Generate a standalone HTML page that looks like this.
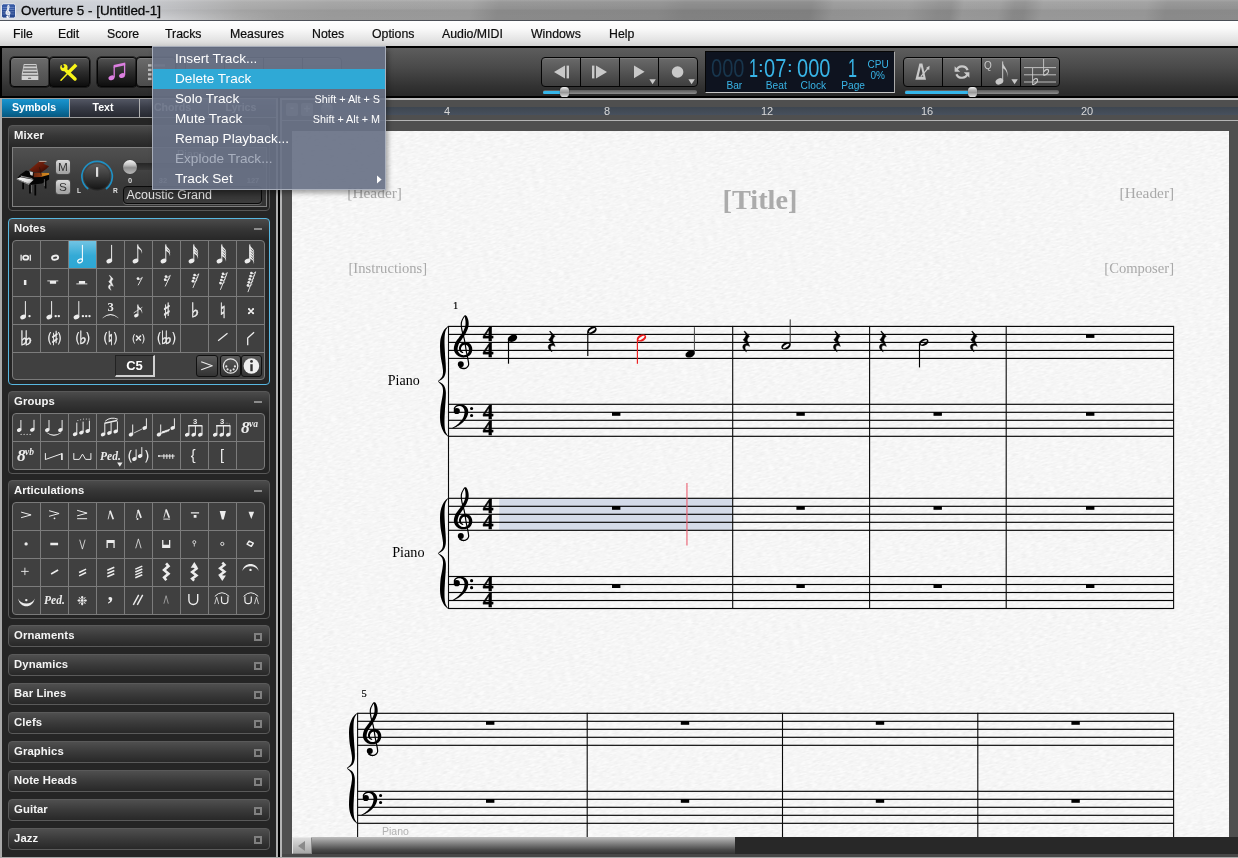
<!DOCTYPE html><html><head><meta charset="utf-8"><title>Overture 5 - [Untitled-1]</title><style>
*{box-sizing:border-box;margin:0;padding:0}
html,body{width:1238px;height:858px;overflow:hidden}
body{position:relative;will-change:transform;background:#252525;font-family:"Liberation Sans",sans-serif;font-size:13px;color:#fff}
.a{position:absolute}
.titlebar{left:0;top:0;width:1238px;height:21px;background:linear-gradient(100deg,#c6cbd3 0,#cbced4 110px,#b9babd 175px,#a6a6a6 240px,#9d9d9d 330px,#9c9c9c 465px,#8d8d8d 492px,#8b8b8b 650px,#848484 675px,#838383 800px,#959595 822px,#999 895px,#8c8c8c 925px,#8b8b8b 938px,#9b9b9b 950px,#999 985px,#8b8b8b 1000px,#8a8a8a 1010px,#9b9b9b 1028px,#9a9a9a 1130px,#8d8d8d 1150px,#8e8e8e 1238px)}
.titlebar .sh{left:0;top:0;width:1238px;height:21px;background:linear-gradient(180deg,rgba(255,255,255,.22) 0,rgba(255,255,255,.10) 2px,rgba(255,255,255,.03) 9px,rgba(0,0,0,.03) 10px,rgba(0,0,0,.02) 19.6px,rgba(58,63,72,.9) 20px,rgba(70,74,82,.85) 21px)}
.title{left:21px;top:3px;font-size:13.4px;color:#080808;-webkit-text-stroke:.3px #080808;white-space:nowrap;letter-spacing:0px}
.menubar{left:0;top:21px;width:1238px;height:25px;background:linear-gradient(180deg,#fff 0,#fafafa 30%,#e4e4e4 75%,#d2d2d2 100%)}
.menubar span{position:absolute;top:5.5px;color:#0c0c0c;-webkit-text-stroke:.2px #0c0c0c;font-size:12.3px;white-space:nowrap}
.toolbar{left:0;top:46px;width:1238px;height:52px;background:#000}
.toolbar .bg{left:2px;top:2px;width:1236px;height:48px;background:linear-gradient(180deg,#5d5d5d 0,#4a4a4a 40%,#323232 80%,#292929 100%)}
.btn{position:absolute;top:57px;height:30px;border:1px solid #050505;border-radius:4px;background:linear-gradient(180deg,#6c6c6c 0,#5a5a5a 50%,#4c4c4c 100%);box-shadow:inset 0 1px 0 rgba(255,255,255,.12),0 0 0 .5px #050505}
.btn.dk{background:linear-gradient(180deg,#525252 0,#2c2c2c 50%,#0e0e0e 100%)}
.btn.t{background:linear-gradient(180deg,#6a6a6a 0,#565656 45%,#3e3e3e 100%);border-radius:0;box-shadow:inset 0 1px 0 rgba(255,255,255,.12)}
.btn.l{border-radius:4px 0 0 4px}.btn.r{border-radius:0 4px 4px 0}
.btn svg{position:absolute;left:0;top:0}
.slider{position:absolute;height:4px;border-radius:2px;background:linear-gradient(180deg,#5a5a5a,#8c8c8c)}
.slider i{position:absolute;left:0;top:.5px;height:3px;border-radius:2px;background:#35b6ea}
.slider b{position:absolute;top:-2.8px;width:9px;height:9.6px;border-radius:3.6px;background:linear-gradient(180deg,#f4f4f4 0,#b4b4b4 30%,#999 55%,#c8c8c8 85%,#e0e0e0 100%);box-shadow:0 0 1px #111}
.lcd{left:705px;top:51px;width:190px;height:42px;background:#0e131f;border:1px solid #060606;border-right-color:#aaa;border-bottom-color:#c8c8c8}
.lcd span{position:absolute;white-space:nowrap;color:#38b4e6;transform-origin:0 0;line-height:1}
.lcd .big{font-size:25.4px;top:3.9px;transform:scaleX(.79)}
.lcd .col{font-size:14px;font-weight:bold;top:8.2px}
.lcd .lab{font-size:10.2px;top:28.8px}
.tabs{left:2px;top:98px;width:276px;height:20px}
.tab{position:absolute;top:1px;height:18px;text-align:center;font-weight:bold;font-size:10.6px;line-height:17px;color:#fff;background:linear-gradient(180deg,#535764 0,#3a3d48 45%,#262830 100%);border-left:1px solid #b0b0b0}
.tab.sel{background:linear-gradient(180deg,#1b95cf 0,#0d79ad 50%,#07587f 100%)}
.panel{position:absolute;left:8px;width:262px;border:1px solid #585858;border-radius:4px;background:linear-gradient(180deg,#4b4b4b 0,#363636 10px,#262626 22px,#242424 100%)}
.panel.c{height:22px;background:linear-gradient(180deg,#4f4f4f 0,#3a3a3a 50%,#282828 100%);border-color:#5a5a5a}
.panel .h{position:absolute;left:5px;top:3px;font-weight:bold;font-size:11.3px;color:#f4f4f4;letter-spacing:.1px}
.panel .mn{position:absolute;right:7px;top:9px;width:8px;height:2px;background:#8c8c8c}
.panel .sq{position:absolute;right:7px;top:6.5px;width:8px;height:8px;border:2px solid #808080}
.grid{position:absolute;left:3px;width:253px;border:1px solid #7a7a7a;border-radius:4px;background:#404040;overflow:hidden}
.grid svg{position:absolute;left:0;top:0}
.dd{left:152px;top:46px;width:234px;height:144px;background:rgba(105,114,135,.93);border:1px solid rgba(190,195,205,.75);box-shadow:2px 3px 5px rgba(0,0,0,.35)}
.dd div{position:absolute;left:0;width:232px;height:20px;line-height:19px;padding-left:22px;font-size:13.6px;color:#fff;white-space:nowrap}
.dd div.hl{background:#2fa9d6}
.dd div.dis{color:#a9b0bf}
.dd div em{position:absolute;right:5px;top:0;font-style:normal;font-size:10.8px;line-height:21px}
</style></head><body>
<div class="a titlebar"><div class="a sh"></div>
<div class="a" style="left:0;top:7px;width:280px;height:13px;background:linear-gradient(180deg,rgba(255,255,255,0),rgba(255,255,255,.42));-webkit-mask-image:linear-gradient(90deg,#000 0,#000 45%,transparent 100%);mask-image:linear-gradient(90deg,#000 0,#000 45%,transparent 100%)"></div>
<svg class="a" style="left:1px;top:3px" width="15" height="16" viewBox="0 0 15 16"><rect x=".5" y=".9" width="14" height="14.2" rx="2" fill="#27488f" stroke="#e4e8f2" stroke-width="1"/><rect x="1.2" y="1.6" width="12.6" height="5.5" rx="1.4" fill="#4268b8" opacity=".55"/><path d="M1.5 4.4h12M1.5 6.6h12M1.5 8.8h12M1.5 11h12" stroke="#9fb2de" stroke-width=".6" opacity=".75"/><path d="M7.03,10.81 L6.97,10.76 L6.87,10.69 L6.76,10.62 L6.66,10.54 L6.59,10.46 L6.55,10.39 L6.52,10.31 L6.49,10.20 L6.47,10.08 L6.47,9.96 L6.48,9.85 L6.50,9.74 L6.54,9.64 L6.60,9.52 L6.68,9.40 L6.76,9.29 L6.85,9.20 L6.94,9.14 L7.03,9.09 L7.15,9.05 L7.27,9.02 L7.40,9.00 L7.51,9.00 L7.61,9.02 L7.70,9.06 L7.82,9.12 L7.93,9.19 L8.03,9.28 L8.12,9.37 L8.18,9.45 L8.24,9.56 L8.29,9.69 L8.33,9.84 L8.37,9.99 L8.38,10.14 L8.38,10.27 L8.37,10.41 L8.34,10.57 L8.29,10.72 L8.23,10.87 L8.16,11.00 L8.08,11.10 L7.97,11.20 L7.83,11.29 L7.65,11.38 L7.47,11.45 L7.29,11.50 L7.11,11.51 L6.94,11.50 L6.77,11.46 L6.59,11.40 L6.43,11.32 L6.28,11.22 L6.16,11.12 L6.04,10.99 L5.93,10.84 L5.83,10.67 L5.75,10.50 L5.69,10.34 L5.66,10.19 L5.65,10.03 L5.67,9.84 L5.70,9.62 L5.75,9.40 L5.82,9.17 L5.90,8.95 L5.99,8.75 L6.11,8.54 L6.25,8.32 L6.41,8.09 L6.58,7.85 L6.74,7.61 L6.88,7.39 L7.03,7.17 L7.19,6.94 L7.34,6.71 L7.49,6.47 L7.63,6.22 L7.75,5.97 L7.87,5.71 L7.98,5.46 L8.08,5.20 L8.17,4.94 L8.24,4.69 L8.28,4.44 L8.31,4.21 L8.32,3.98 L8.31,3.77 L8.29,3.56 L8.27,3.36 L8.23,3.16 L8.18,2.95 L8.12,2.76 L8.06,2.58 L7.99,2.43 L7.93,2.30 L7.87,2.19 L7.80,2.11 L7.73,2.03 L7.64,1.96 L7.52,1.92 L7.40,1.94 L7.31,1.99 L7.23,2.05 L7.16,2.13 L7.09,2.23 L7.02,2.35 L6.94,2.48 L6.86,2.63 L6.76,2.81 L6.66,3.00 L6.56,3.22 L6.48,3.46 L6.43,3.72 L6.40,3.98 L6.40,4.25 L6.42,4.53 L6.45,4.82 L6.49,5.13 L6.55,5.47 L6.62,5.82 L6.72,6.19 L6.83,6.58 L6.94,6.98 L7.05,7.39 L7.15,7.82 L7.23,8.27 L7.31,8.76 L7.39,9.25 L7.47,9.76 L7.55,10.25 L7.63,10.72 L7.72,11.19 L7.82,11.66 L7.92,12.13 L8.01,12.56 L8.08,12.94 L8.13,13.26 L8.15,13.50 L8.16,13.66 L8.15,13.78 L8.13,13.86 L8.10,13.94 L8.05,14.03 L7.99,14.13 L7.90,14.23 L7.80,14.32 L7.69,14.40 L7.58,14.46 L7.47,14.51 L7.37,14.54 L7.25,14.55 L7.12,14.55 L6.99,14.54 L6.87,14.51 L6.77,14.48 L6.67,14.44 L6.57,14.37 L6.47,14.29 L6.37,14.21 L6.28,14.13 L6.22,14.08 L5.96,14.42 L6.02,14.46 L6.11,14.53 L6.23,14.61 L6.36,14.70 L6.51,14.77 L6.66,14.83 L6.81,14.86 L6.96,14.88 L7.12,14.88 L7.27,14.87 L7.43,14.85 L7.58,14.80 L7.72,14.73 L7.86,14.65 L7.99,14.55 L8.11,14.43 L8.22,14.31 L8.30,14.18 L8.36,14.06 L8.41,13.95 L8.44,13.82 L8.45,13.66 L8.44,13.47 L8.41,13.22 L8.36,12.89 L8.29,12.50 L8.20,12.07 L8.10,11.60 L8.00,11.13 L7.91,10.67 L7.83,10.20 L7.75,9.71 L7.68,9.21 L7.60,8.71 L7.52,8.22 L7.43,7.76 L7.33,7.33 L7.22,6.91 L7.10,6.50 L7.00,6.12 L6.90,5.76 L6.83,5.41 L6.78,5.09 L6.73,4.79 L6.71,4.50 L6.69,4.24 L6.69,3.99 L6.71,3.76 L6.75,3.53 L6.81,3.32 L6.90,3.11 L6.98,2.92 L7.07,2.74 L7.15,2.59 L7.22,2.47 L7.29,2.37 L7.35,2.29 L7.40,2.24 L7.45,2.22 L7.46,2.22 L7.44,2.24 L7.41,2.24 L7.39,2.26 L7.39,2.31 L7.40,2.39 L7.41,2.49 L7.44,2.61 L7.47,2.76 L7.50,2.92 L7.52,3.09 L7.54,3.27 L7.55,3.44 L7.56,3.61 L7.56,3.79 L7.56,3.97 L7.55,4.14 L7.53,4.33 L7.49,4.51 L7.43,4.72 L7.36,4.94 L7.27,5.17 L7.17,5.40 L7.06,5.64 L6.95,5.86 L6.83,6.07 L6.69,6.28 L6.54,6.49 L6.38,6.71 L6.22,6.93 L6.06,7.15 L5.91,7.37 L5.73,7.59 L5.56,7.82 L5.38,8.07 L5.22,8.33 L5.08,8.60 L4.97,8.88 L4.88,9.16 L4.81,9.45 L4.76,9.75 L4.75,10.04 L4.79,10.34 L4.87,10.62 L5.00,10.88 L5.16,11.12 L5.34,11.33 L5.53,11.51 L5.73,11.67 L5.94,11.79 L6.17,11.89 L6.41,11.96 L6.65,12.01 L6.89,12.04 L7.13,12.04 L7.36,12.02 L7.61,11.98 L7.85,11.92 L8.09,11.83 L8.31,11.72 L8.51,11.59 L8.69,11.42 L8.84,11.22 L8.96,11.02 L9.06,10.80 L9.13,10.57 L9.17,10.35 L9.18,10.12 L9.16,9.88 L9.12,9.65 L9.05,9.42 L8.96,9.21 L8.84,9.01 L8.69,8.83 L8.52,8.68 L8.34,8.56 L8.14,8.46 L7.94,8.38 L7.74,8.34 L7.53,8.32 L7.32,8.34 L7.12,8.39 L6.93,8.46 L6.75,8.54 L6.58,8.65 L6.44,8.79 L6.31,8.94 L6.21,9.11 L6.12,9.28 L6.06,9.46 L6.01,9.63 L5.99,9.81 L5.99,9.98 L6.02,10.16 L6.06,10.32 L6.12,10.47 L6.20,10.61 L6.32,10.74 L6.46,10.83 L6.61,10.90 L6.74,10.95 L6.85,10.99 L6.92,11.02Z M5.52,13.67 a0.90,0.90 0 1,0 1.80,0 a0.90,0.90 0 1,0 -1.80,0Z" fill="#fff" stroke="#fff" stroke-width=".45"/></svg>
<div class="a title">Overture 5 - [Untitled-1]</div></div>
<div class="a menubar">
<span style="left:13px">File</span>
<span style="left:58px">Edit</span>
<span style="left:107px">Score</span>
<span style="left:165px">Tracks</span>
<span style="left:230px">Measures</span>
<span style="left:312px">Notes</span>
<span style="left:372px">Options</span>
<span style="left:442px">Audio/MIDI</span>
<span style="left:531px">Windows</span>
<span style="left:609px">Help</span>
</div>
<div class="a toolbar"><div class="a bg"></div></div>
<div class="btn " style="left:10px;width:40px"><svg width="38" height="28" viewBox="0 0 38 28"><path d="M12.8,6h12.6l1.8,9.8v6.2h-16.4v-6.2Z" fill="#cdcdcd"/><path d="M13.4,7.0h11.4l.25,1.4h-11.9Z" fill="#6e6e6e"/><path d="M12.7,10.2h12.8l.25,1.5h-13.3Z" fill="#6e6e6e"/><path d="M12.1,13.5h14l.25,1.5h-14.5Z" fill="#6e6e6e"/><path d="M11.3,16.8h15.6v1.3h-15.6Z" fill="#7a7a7a"/><path d="M10.8,18.1h16.4v3.9h-16.4Z" fill="#d2d2d2"/><rect x="17" y="19.8" width="3.2" height="1" rx=".4" fill="#555"/></svg></div>
<div class="btn dk" style="left:49px;width:41px"><svg width="38" height="28" viewBox="0 0 38 28"><path d="M11,22.3 L18.2,14.8" stroke="#f8f418" stroke-width="1.5" stroke-linecap="round"/><path d="M17.9,15.1 L26.2,6.8" stroke="#f8f418" stroke-width="3.5"/><path d="M16.0,12.4 L25.0,21.0" stroke="#f8f418" stroke-width="3.5" stroke-linecap="round"/><circle cx="13.9" cy="9.6" r="3.7" fill="#f8f418"/><path d="M13.2,9.0 L9.6,5.0 L13.6,4.4Z" fill="#3b3b3b"/><circle cx="13.0" cy="8.6" r="1.3" fill="#3b3b3b"/></svg></div>
<div class="btn dk" style="left:97px;width:40px"><svg width="38" height="28" viewBox="0 0 38 28"><path d="M15.6,7.0 L27.2,4.4 V7.2 L15.6,9.8Z" fill="#dc7fe0"/><path d="M16.2,8.6V19.4M26.6,5.6V17.2" stroke="#dc7fe0" stroke-width="1.3"/><ellipse cx="13.4" cy="19.8" rx="3.0" ry="2.3" transform="rotate(-22 13.4 19.8)" fill="#dc7fe0"/><ellipse cx="24.0" cy="17.6" rx="3.0" ry="2.3" transform="rotate(-22 24 17.6)" fill="#dc7fe0"/></svg></div>
<div class="btn " style="left:136px;width:40px"><svg width="38" height="28" viewBox="0 0 38 28"><rect x="11" y="6.2" width="3.6" height="2.4" fill="#bdbdbd"/><rect x="17" y="6.2" width="11" height="2.4" fill="#bdbdbd"/><rect x="11" y="10.7" width="3.6" height="2.4" fill="#bdbdbd"/><rect x="17" y="10.7" width="11" height="2.4" fill="#bdbdbd"/><rect x="11" y="15.2" width="3.6" height="2.4" fill="#bdbdbd"/><rect x="17" y="15.2" width="11" height="2.4" fill="#bdbdbd"/><rect x="11" y="19.7" width="3.6" height="2.4" fill="#bdbdbd"/><rect x="17" y="19.7" width="11" height="2.4" fill="#bdbdbd"/></svg></div>
<div class="btn t l" style="left:185px;width:40px"></div>
<div class="btn t" style="left:224px;width:40px"></div>
<div class="btn t" style="left:263px;width:40px"></div>
<div class="btn t r" style="left:302px;width:40px"></div>
<div class="btn t l" style="left:541px;width:40px"><svg width="38" height="28" viewBox="0 0 38 28"><path d="M23,7.6v12.8l-11,-6.4Z" fill="#c9c9c9"/><rect x="24.6" y="7.6" width="2.4" height="12.8" fill="#c9c9c9"/></svg></div>
<div class="btn t" style="left:580px;width:40px"><svg width="38" height="28" viewBox="0 0 38 28"><path d="M15,7.6v12.8l11,-6.4Z" fill="#c9c9c9"/><rect x="11" y="7.6" width="2.4" height="12.8" fill="#c9c9c9"/></svg></div>
<div class="btn t" style="left:619px;width:40px"><svg width="38" height="28" viewBox="0 0 38 28"><path d="M14,7.4v12.8l10.6,-6.4Z" fill="#c9c9c9"/><path d="M29.4,21.2h6.4l-3.2,5Z" fill="#c9c9c9"/></svg></div>
<div class="btn t r" style="left:658px;width:40px"><svg width="38" height="28" viewBox="0 0 38 28"><circle cx="18.6" cy="14" r="5.8" fill="#c9c9c9"/><path d="M29.4,21.2h6.4l-3.2,5Z" fill="#c9c9c9"/></svg></div>
<div class="slider" style="left:543px;top:90px;width:154px"><i style="width:20px"></i><b style="left:16.5px"></b></div>
<div class="a lcd"><span class="big" style="left:4.6px;color:#18354c">000</span><span class="big" style="left:42.6px;transform:scaleX(.64)">1</span><span class="col" style="left:52.4px">:</span><span class="big" style="left:58px">07</span><span class="col" style="left:81.6px">:</span><span class="big" style="left:90.6px">000</span><span class="big" style="left:141.6px;transform:scaleX(.64)">1</span><span class="lab" style="left:20.4px">Bar</span><span class="lab" style="left:59.8px">Beat</span><span class="lab" style="left:94.6px">Clock</span><span class="lab" style="left:135.2px">Page</span><span style="left:161.6px;top:7.8px;font-size:10px">CPU</span><span style="left:164.4px;top:18.8px;font-size:10px">0%</span></div>
<div class="btn t l" style="left:903px;width:40px"><svg width="38" height="28" viewBox="0 0 38 28"><path d="M15.4,5.6h3.0l3.6,16.2h-10.6Z" fill="#c9c9c9"/><path d="M16.9,8.6 l2.4,10.2 h-4.8Z" fill="#4a4a4a"/><path d="M16.8,18.6 L24.6,9.6" stroke="#c9c9c9" stroke-width="1.3"/><path d="M22.0,10.0l3.6,-2.2l-0.4,4.2Z" fill="#c9c9c9"/></svg></div>
<div class="btn t" style="left:942px;width:40px"><svg width="38" height="28" viewBox="0 0 38 28"><path d="M13.4,12.4 A6,6 0 0 1 24.6,12.2" fill="none" stroke="#c9c9c9" stroke-width="2.2"/><path d="M24.6,15.6 A6,6 0 0 1 13.4,16.2" fill="none" stroke="#c9c9c9" stroke-width="2.2"/><path d="M11.6,8.2v5.6h5.6Z" fill="#c9c9c9"/><path d="M26.4,19.8v-5.6h-5.6Z" fill="#c9c9c9"/></svg></div>
<div class="btn t" style="left:981px;width:40px"><svg width="38" height="28" viewBox="0 0 38 28"><text x="5.90" y="11.20" text-anchor="middle" style="font-family:'Liberation Sans',sans-serif;font-size:10.0px;" fill="#c9c9c9">Q</text><path d="M20.70,22.90 L20.70,3.40" stroke="#c9c9c9" stroke-width="1.00" stroke-linecap="butt" fill="none"/><ellipse cx="17.40" cy="23.40" rx="4.00" ry="3.00" transform="rotate(-25 17.40 23.40)" fill="#c9c9c9"/><path d="M20.5,3.4 c0.6,5.6 7.0,7.6 4.6,16.0 c0.8,-6.0 -2.6,-8.4 -4.6,-9.4Z" fill="#c9c9c9"/><path d="M29.4,21.2h6.4l-3.2,5Z" fill="#c9c9c9"/></svg></div>
<div class="btn t r" style="left:1020px;width:40px"><svg width="38" height="28" viewBox="0 0 38 28"><path d="M3,9.6H35M3,16.8H35M3,24H35" stroke="#c9c9c9" stroke-width=".9"/><path d="M22.6,1V17.6M11.6,10V27" stroke="#c9c9c9" stroke-width=".9"/><path d="M22.8,17.4 c3.6,-1 5.4,-3.4 4.6,-5.4 c-1.2,-1.4 -3.4,-0.2 -4.4,1.6" fill="none" stroke="#c9c9c9" stroke-width="1.2"/><path d="M11.8,26.6 c3.6,-1 5.4,-3.4 4.6,-5.4 c-1.2,-1.4 -3.4,-0.2 -4.4,1.6" fill="none" stroke="#c9c9c9" stroke-width="1.2"/></svg></div>
<div class="slider" style="left:905px;top:90px;width:154px"><i style="width:68px"></i><b style="left:62.7px"></b></div>
<div class="a" style="left:0;top:98px;width:2px;height:760px;background:#a9a9a9"></div>
<div class="a" style="left:2px;top:98px;width:276px;height:1px;background:#9c9c9c"></div>
<div class="a" style="left:2px;top:117px;width:274px;height:1px;background:#9c9c9c"></div>
<div class="a tabs">
<div class="tab sel" style="left:0px;width:67px;border-left:0;padding-right:3px">Symbols</div>
<div class="tab " style="left:67px;width:70px;padding-right:3px">Text</div>
<div class="tab " style="left:137px;width:69px;padding-right:3px">Chords</div>
<div class="tab " style="left:206px;width:70px;padding-right:5px">Lyrics</div>
</div>
<div class="panel" style="top:125px;height:86px"><span class="h">Mixer</span>
<div class="a" style="left:3px;top:21px;width:255px;height:60px;border:1px solid #808080;background:linear-gradient(180deg,#505050,#3a3a3a 60%,#333)"></div>
</div>
<svg class="a" style="left:16px;top:160px" width="36" height="38" viewBox="0 0 36 38"><defs><linearGradient id="lid" x1="0" y1="0" x2="1" y2="1"><stop offset="0" stop-color="#8a2a10"/><stop offset=".6" stop-color="#5a1608"/><stop offset="1" stop-color="#1a0502"/></linearGradient><linearGradient id="ins" x1="0" y1="0" x2="1" y2="0"><stop offset="0" stop-color="#6a2410"/><stop offset=".45" stop-color="#8a3a12"/><stop offset=".55" stop-color="#c87a1c"/><stop offset="1" stop-color="#d08a22"/></linearGradient><linearGradient id="keys" x1="0" y1="0" x2="1" y2="1"><stop offset="0" stop-color="#fff"/><stop offset=".6" stop-color="#e0e0e0"/><stop offset="1" stop-color="#8a8a8a"/></linearGradient></defs><path d="M4.3,14.4 L10,10.5 L13.2,11.2 L17.7,12.4 L33.1,13.4 L33.1,19.6 L26,23.4 L15.4,24.8 L13.2,24 L0.7,18.8Z" fill="#050505"/><path d="M17.7,12.8 L33.1,13.0 L33.1,14.8 L24.8,16.9 L17.7,17.2Z" fill="url(#ins)"/><path d="M13.2,9.9 L23.2,1.5 L30.5,1.5 L27.3,3.8 L33.1,6.3 L29.9,9.2 L24.8,12.8 L17.7,12.1Z" fill="url(#lid)"/><path d="M23.2,1.4 L30.5,1.4" stroke="#e8d8d0" stroke-width=".7"/><path d="M13.4,11.2 L17.0,12.2 L16.6,15.8 L14.4,15.0Z" fill="#cfcfcf"/><path d="M4.6,15.6 L15.6,18.0 L17.2,19.2 L5.0,17.0Z" fill="#8a8a8a"/><path d="M0.7,18.8 L4.3,17.2 L17.7,19.8 L13.2,24.0Z" fill="url(#keys)"/><path d="M0.7,18.8 L13.2,24.0 L13.2,24.9 L0.7,19.6Z" fill="#9a9a9a"/><path d="M23.5,7.3 L25.4,15.6" stroke="#2a1208" stroke-width=".7"/><path d="M7.1,22.8 V29.2 M14.0,24.6 V33.6 M19.3,24.6 V35.6 M29.6,18.6 V28.6" stroke="#030303" stroke-width="1.7"/><path d="M15.4,25 V32.4 M28.4,19 V26" stroke="#8a8a8a" stroke-width=".6"/></svg>
<div class="a" style="left:55px;top:159px;width:16px;height:16px;border-radius:3.5px;background:linear-gradient(180deg,#dcdcdc,#b4b4b4 55%,#a2a2a2);border:1px solid #4a4a4a;color:#333;font-size:11.8px;line-height:14.5px;text-align:center">M</div>
<div class="a" style="left:55px;top:179px;width:16px;height:16px;border-radius:3.5px;background:linear-gradient(180deg,#dcdcdc,#b4b4b4 55%,#a2a2a2);border:1px solid #4a4a4a;color:#333;font-size:11.8px;line-height:14.5px;text-align:center">S</div>
<svg class="a" style="left:74px;top:155px" width="48" height="44" viewBox="74 155 48 44"><defs><linearGradient id="kn" x1="0" y1="0" x2="0" y2="1"><stop offset="0" stop-color="#5c5c5c"/><stop offset=".5" stop-color="#3a3a3a"/><stop offset="1" stop-color="#161616"/></linearGradient></defs><circle cx="97.1" cy="177.6" r="12.9" fill="#1a1a1a" opacity=".6"/><circle cx="97.1" cy="176.5" r="12.7" fill="url(#kn)"/><path d="M87.7,188.5 A15.2,15.2 0 1 1 106.5,188.5" fill="none" stroke="#1f90c4" stroke-width="1.7" stroke-linecap="round"/><path d="M97.1,167.2V176.8" stroke="#dcdcdc" stroke-width="2.2"/><text x="77.0" y="192.8" style="font-family:'Liberation Sans',sans-serif;font-size:6.6px;font-weight:bold" fill="#e0e0e0">L</text><text x="113.0" y="192.8" style="font-family:'Liberation Sans',sans-serif;font-size:6.6px;font-weight:bold" fill="#e0e0e0">R</text></svg>
<div class="a" style="left:177px;top:148px;font-size:11px;color:#e8e8e8">Piano</div>
<div class="a" style="left:127px;top:163px;width:136px;height:7px;border-radius:3px;background:linear-gradient(180deg,#262626,#3a3a3a)"></div>
<div class="a" style="left:123px;top:160px;width:14px;height:14px;border-radius:7px;background:linear-gradient(180deg,#f4f4f4 0,#c4c4c4 35%,#8e8e8e 55%,#b8b8b8 100%);box-shadow:0 0 1px #222"></div>
<div class="a" style="left:130px;top:176px;width:30px;margin-left:-15px;text-align:center;font-size:7.5px;font-weight:bold;color:#d8d8d8">0</div>
<div class="a" style="left:163px;top:176px;width:30px;margin-left:-15px;text-align:center;font-size:7.5px;font-weight:bold;color:#d8d8d8">32</div>
<div class="a" style="left:253px;top:176px;width:30px;margin-left:-15px;text-align:center;font-size:7.5px;font-weight:bold;color:#d8d8d8">127</div>
<div class="a" style="left:123px;top:186px;width:139px;height:18px;border-radius:4px;border:1px solid #0a0a0a;background:linear-gradient(180deg,#2c2c2c,#3d3d3d);box-shadow:0 1px 0 #666;color:#e2e2e2;font-size:12.5px;line-height:17px;padding-left:2.5px;white-space:nowrap">Acoustic Grand</div>
<div class="panel" style="top:218px;height:167px;border-color:#58b7e0"><span class="h">Notes</span><i class="mn"></i>
<div class="grid" style="top:21px;height:140px"><svg width="253" height="112" viewBox="0 0 253 112"><defs><linearGradient id="selg" x1="0" y1="0" x2="0" y2="1"><stop offset="0" stop-color="#72c4e3"/><stop offset=".55" stop-color="#33aad6"/><stop offset="1" stop-color="#2ea7d4"/></linearGradient></defs><rect x="56" y="0" width="27" height="27" fill="url(#selg)"/><g transform="translate(-0.5,-1.3)"><ellipse cx="13.20" cy="18.00" rx="2.60" ry="2.00" transform="rotate(0 13.20 18.00)" fill="none" stroke="#ececec" stroke-width="1.70"/><path d="M8.60,15.00 L8.60,21.00" stroke="#ececec" stroke-width="1.30" stroke-linecap="butt" fill="none"/><path d="M17.80,15.00 L17.80,21.00" stroke="#ececec" stroke-width="1.30" stroke-linecap="butt" fill="none"/></g><g transform="translate(27.5,-1.3)"><ellipse cx="14.60" cy="18.00" rx="3.10" ry="2.00" transform="rotate(-12 14.60 18.00)" fill="none" stroke="#ececec" stroke-width="1.90"/></g><g transform="translate(55.5,-1.3)"><path d="M13.90,20.70 L13.90,5.20" stroke="#fff" stroke-width="1.00" stroke-linecap="butt" fill="none"/><ellipse cx="11.60" cy="21.20" rx="2.50" ry="1.70" transform="rotate(-25 11.60 21.20)" fill="none" stroke="#fff" stroke-width="1.10"/></g><g transform="translate(83.5,-1.3)"><path d="M15.10,20.70 L15.10,5.20" stroke="#ececec" stroke-width="1.00" stroke-linecap="butt" fill="none"/><ellipse cx="12.80" cy="21.20" rx="3.00" ry="2.20" transform="rotate(-25 12.80 21.20)" fill="#ececec"/></g><g transform="translate(111.5,-1.3)"><path d="M13.30,20.70 L13.30,4.70" stroke="#ececec" stroke-width="1.00" stroke-linecap="butt" fill="none"/><ellipse cx="11.00" cy="21.20" rx="3.00" ry="2.20" transform="rotate(-25 11.00 21.20)" fill="#ececec"/><path d="M13.00,4.70 c0.5,2.8 6.0,4.4 4.4,9.6 c0.2,-3.8 -2.6,-5.0 -4.4,-5.8Z" fill="#ececec"/></g><g transform="translate(139.5,-1.3)"><path d="M13.30,20.70 L13.30,4.70" stroke="#ececec" stroke-width="1.00" stroke-linecap="butt" fill="none"/><ellipse cx="11.00" cy="21.20" rx="3.00" ry="2.20" transform="rotate(-25 11.00 21.20)" fill="#ececec"/><path d="M13.00,4.70 c0.5,2.8 6.0,4.4 4.4,9.6 c0.2,-3.8 -2.6,-5.0 -4.4,-5.8Z" fill="#ececec"/><path d="M13.00,7.30 c0.5,2.8 6.0,4.4 4.4,9.6 c0.2,-3.8 -2.6,-5.0 -4.4,-5.8Z" fill="#ececec"/></g><g transform="translate(167.5,-1.3)"><path d="M13.30,20.70 L13.30,4.70" stroke="#ececec" stroke-width="1.00" stroke-linecap="butt" fill="none"/><ellipse cx="11.00" cy="21.20" rx="3.00" ry="2.20" transform="rotate(-25 11.00 21.20)" fill="#ececec"/><path d="M13.00,4.70 c0.5,2.8 6.0,4.4 4.4,9.6 c0.2,-3.8 -2.6,-5.0 -4.4,-5.8Z" fill="#ececec"/><path d="M13.00,7.30 c0.5,2.8 6.0,4.4 4.4,9.6 c0.2,-3.8 -2.6,-5.0 -4.4,-5.8Z" fill="#ececec"/><path d="M13.00,9.90 c0.5,2.8 6.0,4.4 4.4,9.6 c0.2,-3.8 -2.6,-5.0 -4.4,-5.8Z" fill="#ececec"/></g><g transform="translate(195.5,-1.3)"><path d="M13.30,20.70 L13.30,4.70" stroke="#ececec" stroke-width="1.00" stroke-linecap="butt" fill="none"/><ellipse cx="11.00" cy="21.20" rx="3.00" ry="2.20" transform="rotate(-25 11.00 21.20)" fill="#ececec"/><path d="M13.00,4.70 c0.5,2.8 6.0,4.4 4.4,9.6 c0.2,-3.8 -2.6,-5.0 -4.4,-5.8Z" fill="#ececec"/><path d="M13.00,7.30 c0.5,2.8 6.0,4.4 4.4,9.6 c0.2,-3.8 -2.6,-5.0 -4.4,-5.8Z" fill="#ececec"/><path d="M13.00,9.90 c0.5,2.8 6.0,4.4 4.4,9.6 c0.2,-3.8 -2.6,-5.0 -4.4,-5.8Z" fill="#ececec"/><path d="M13.00,12.50 c0.5,2.8 6.0,4.4 4.4,9.6 c0.2,-3.8 -2.6,-5.0 -4.4,-5.8Z" fill="#ececec"/></g><g transform="translate(223.5,-1.3)"><path d="M13.30,20.70 L13.30,4.70" stroke="#ececec" stroke-width="1.00" stroke-linecap="butt" fill="none"/><ellipse cx="11.00" cy="21.20" rx="3.00" ry="2.20" transform="rotate(-25 11.00 21.20)" fill="#ececec"/><path d="M13.00,4.70 c0.5,2.8 6.0,4.4 4.4,9.6 c0.2,-3.8 -2.6,-5.0 -4.4,-5.8Z" fill="#ececec"/><path d="M13.00,7.30 c0.5,2.8 6.0,4.4 4.4,9.6 c0.2,-3.8 -2.6,-5.0 -4.4,-5.8Z" fill="#ececec"/><path d="M13.00,9.90 c0.5,2.8 6.0,4.4 4.4,9.6 c0.2,-3.8 -2.6,-5.0 -4.4,-5.8Z" fill="#ececec"/><path d="M13.00,12.50 c0.5,2.8 6.0,4.4 4.4,9.6 c0.2,-3.8 -2.6,-5.0 -4.4,-5.8Z" fill="#ececec"/><path d="M13.00,15.10 c0.5,2.8 6.0,4.4 4.4,9.6 c0.2,-3.8 -2.6,-5.0 -4.4,-5.8Z" fill="#ececec"/></g><g transform="translate(-0.5,26.7)"><path d="M11.4,12.4h2.5v5h-2.5Z" fill="#ececec"/></g><g transform="translate(27.5,26.7)"><path d="M6.80,13.20 L17.80,13.20" stroke="#ececec" stroke-width="0.90" stroke-linecap="butt" fill="none"/><path d="M9.4,13.4h6.2v2.7h-6.2Z" fill="#ececec"/></g><g transform="translate(55.5,26.7)"><path d="M7.80,16.20 L18.80,16.20" stroke="#ececec" stroke-width="0.90" stroke-linecap="butt" fill="none"/><path d="M10.4,13.2h6.2v2.8h-6.2Z" fill="#ececec"/></g><g transform="translate(83.5,26.7)"><path d="M13.24,7.60L16.70,11.42C15.54,12.50 14.97,13.50 15.11,14.51L16.84,18.62C15.04,17.39 13.67,17.90 13.53,19.26C13.46,20.42 13.96,21.57 14.61,22.58C12.52,21.28 11.80,20.13 11.94,18.83C12.16,17.18 13.60,16.53 14.97,16.96L12.23,13.94C12.95,13.22 14.25,11.63 14.39,10.19L12.88,7.89Z" fill="#ececec" stroke="#ececec" stroke-width="0.40" stroke-linejoin="round"/></g><g transform="translate(111.5,26.7)"><path d="M17.80,9.70 L13.60,17.60" stroke="#ececec" stroke-width="0.90" stroke-linecap="butt" fill="none"/><circle cx="13.50" cy="10.90" r="1.35" fill="#ececec"/><path d="M13.60,11.60 q1.8,1.0 4.0,-1.6" stroke="#ececec" stroke-width="0.80" fill="none" stroke-linecap="round" stroke-linejoin="round"/></g><g transform="translate(139.5,26.7)"><path d="M17.80,7.70 L12.70,18.70" stroke="#ececec" stroke-width="0.90" stroke-linecap="butt" fill="none"/><circle cx="13.50" cy="8.90" r="1.35" fill="#ececec"/><path d="M13.60,9.60 q1.8,1.0 4.0,-1.6" stroke="#ececec" stroke-width="0.80" fill="none" stroke-linecap="round" stroke-linejoin="round"/><circle cx="12.65" cy="12.00" r="1.35" fill="#ececec"/><path d="M12.75,12.70 q1.8,1.0 4.0,-1.6" stroke="#ececec" stroke-width="0.80" fill="none" stroke-linecap="round" stroke-linejoin="round"/></g><g transform="translate(167.5,26.7)"><path d="M18.40,6.10 L12.40,20.20" stroke="#ececec" stroke-width="0.90" stroke-linecap="butt" fill="none"/><circle cx="14.10" cy="7.30" r="1.35" fill="#ececec"/><path d="M14.20,8.00 q1.8,1.0 4.0,-1.6" stroke="#ececec" stroke-width="0.80" fill="none" stroke-linecap="round" stroke-linejoin="round"/><circle cx="13.25" cy="10.40" r="1.35" fill="#ececec"/><path d="M13.35,11.10 q1.8,1.0 4.0,-1.6" stroke="#ececec" stroke-width="0.80" fill="none" stroke-linecap="round" stroke-linejoin="round"/><circle cx="12.40" cy="13.50" r="1.35" fill="#ececec"/><path d="M12.50,14.20 q1.8,1.0 4.0,-1.6" stroke="#ececec" stroke-width="0.80" fill="none" stroke-linecap="round" stroke-linejoin="round"/></g><g transform="translate(195.5,26.7)"><path d="M18.80,4.90 L11.90,22.10" stroke="#ececec" stroke-width="0.90" stroke-linecap="butt" fill="none"/><circle cx="14.50" cy="6.10" r="1.35" fill="#ececec"/><path d="M14.60,6.80 q1.8,1.0 4.0,-1.6" stroke="#ececec" stroke-width="0.80" fill="none" stroke-linecap="round" stroke-linejoin="round"/><circle cx="13.65" cy="9.20" r="1.35" fill="#ececec"/><path d="M13.75,9.90 q1.8,1.0 4.0,-1.6" stroke="#ececec" stroke-width="0.80" fill="none" stroke-linecap="round" stroke-linejoin="round"/><circle cx="12.80" cy="12.30" r="1.35" fill="#ececec"/><path d="M12.90,13.00 q1.8,1.0 4.0,-1.6" stroke="#ececec" stroke-width="0.80" fill="none" stroke-linecap="round" stroke-linejoin="round"/><circle cx="11.95" cy="15.40" r="1.35" fill="#ececec"/><path d="M12.05,16.10 q1.8,1.0 4.0,-1.6" stroke="#ececec" stroke-width="0.80" fill="none" stroke-linecap="round" stroke-linejoin="round"/></g><g transform="translate(223.5,26.7)"><path d="M19.20,4.10 L11.40,24.40" stroke="#ececec" stroke-width="0.90" stroke-linecap="butt" fill="none"/><circle cx="14.90" cy="5.30" r="1.35" fill="#ececec"/><path d="M15.00,6.00 q1.8,1.0 4.0,-1.6" stroke="#ececec" stroke-width="0.80" fill="none" stroke-linecap="round" stroke-linejoin="round"/><circle cx="14.05" cy="8.40" r="1.35" fill="#ececec"/><path d="M14.15,9.10 q1.8,1.0 4.0,-1.6" stroke="#ececec" stroke-width="0.80" fill="none" stroke-linecap="round" stroke-linejoin="round"/><circle cx="13.20" cy="11.50" r="1.35" fill="#ececec"/><path d="M13.30,12.20 q1.8,1.0 4.0,-1.6" stroke="#ececec" stroke-width="0.80" fill="none" stroke-linecap="round" stroke-linejoin="round"/><circle cx="12.35" cy="14.60" r="1.35" fill="#ececec"/><path d="M12.45,15.30 q1.8,1.0 4.0,-1.6" stroke="#ececec" stroke-width="0.80" fill="none" stroke-linecap="round" stroke-linejoin="round"/><circle cx="11.50" cy="17.70" r="1.35" fill="#ececec"/><path d="M11.60,18.40 q1.8,1.0 4.0,-1.6" stroke="#ececec" stroke-width="0.80" fill="none" stroke-linecap="round" stroke-linejoin="round"/></g><g transform="translate(-0.5,54.7)"><path d="M12.90,20.90 L12.90,5.40" stroke="#ececec" stroke-width="1.00" stroke-linecap="butt" fill="none"/><ellipse cx="10.60" cy="21.40" rx="3.00" ry="2.20" transform="rotate(-25 10.60 21.40)" fill="#ececec"/><circle cx="17.00" cy="20.40" r="1.20" fill="#ececec"/></g><g transform="translate(27.5,54.7)"><path d="M11.10,20.90 L11.10,5.40" stroke="#ececec" stroke-width="1.00" stroke-linecap="butt" fill="none"/><ellipse cx="8.80" cy="21.40" rx="3.00" ry="2.20" transform="rotate(-25 8.80 21.40)" fill="#ececec"/><circle cx="15.20" cy="20.40" r="1.20" fill="#ececec"/><circle cx="18.30" cy="20.40" r="1.20" fill="#ececec"/></g><g transform="translate(55.5,54.7)"><path d="M10.30,20.90 L10.30,5.40" stroke="#ececec" stroke-width="1.00" stroke-linecap="butt" fill="none"/><ellipse cx="8.00" cy="21.40" rx="3.00" ry="2.20" transform="rotate(-25 8.00 21.40)" fill="#ececec"/><circle cx="14.40" cy="20.40" r="1.20" fill="#ececec"/><circle cx="17.70" cy="20.40" r="1.20" fill="#ececec"/><circle cx="21.00" cy="20.40" r="1.20" fill="#ececec"/></g><g transform="translate(83.5,54.7)"><text x="14.00" y="15.60" text-anchor="middle" style="font-family:'Liberation Serif',serif;font-size:12.5px;font-weight:bold" fill="#ececec">3</text><path d="M6.4,22.0 Q14.0,14.6 21.6,22.0 Q14.0,16.6 6.4,22.0Z" fill="#ececec"/><path d="M6.4,22.0 Q14.0,15.6 21.6,22.0" stroke="#ececec" stroke-width="0.50" fill="none" stroke-linecap="round" stroke-linejoin="round"/></g><g transform="translate(111.5,54.7)"><path d="M13.40,19.30 L13.40,8.80" stroke="#ececec" stroke-width="1.00" stroke-linecap="butt" fill="none"/><ellipse cx="11.80" cy="19.80" rx="2.30" ry="1.70" transform="rotate(-25 11.80 19.80)" fill="#ececec"/><path d="M13.10,8.80 c0.5,2.8 6.0,4.4 4.4,9.6 c0.2,-3.8 -2.6,-5.0 -4.4,-5.8Z" fill="#ececec"/><path d="M9.20,17.20 L17.80,11.60" stroke="#ececec" stroke-width="0.80" stroke-linecap="butt" fill="none"/></g><g transform="translate(139.5,54.7)"><text transform="translate(14.20,21.80) scale(0.80,1)" text-anchor="middle" style="font-family:'DejaVu Sans',sans-serif;font-size:21.0px;" fill="#ececec" stroke="#ececec" stroke-width=".5">♯</text></g><g transform="translate(167.5,54.7)"><text transform="translate(14.60,21.00) scale(0.90,1)" text-anchor="middle" style="font-family:'DejaVu Sans',sans-serif;font-size:20.0px;" fill="#ececec" stroke="#ececec" stroke-width=".5">♭</text></g><g transform="translate(195.5,54.7)"><text transform="translate(14.00,21.80) scale(0.80,1)" text-anchor="middle" style="font-family:'DejaVu Sans',sans-serif;font-size:21.0px;" fill="#ececec" stroke="#ececec" stroke-width=".5">♮</text></g><g transform="translate(223.5,54.7)"><path d="M12.4,13.4 L16.6,17.6 M16.6,13.4 L12.4,17.6" stroke="#ececec" stroke-width="1.50" fill="none" stroke-linecap="butt" stroke-linejoin="round"/><circle cx="12.40" cy="13.40" r="1.00" fill="#ececec"/><circle cx="16.60" cy="13.40" r="1.00" fill="#ececec"/><circle cx="12.40" cy="17.60" r="1.00" fill="#ececec"/><circle cx="16.60" cy="17.60" r="1.00" fill="#ececec"/></g><g transform="translate(-0.5,82.7)"><text transform="translate(11.60,21.40) scale(0.85,1)" text-anchor="middle" style="font-family:'DejaVu Sans',sans-serif;font-size:20.0px;" fill="#ececec" stroke="#ececec" stroke-width=".5">♭</text><text transform="translate(15.80,21.40) scale(0.85,1)" text-anchor="middle" style="font-family:'DejaVu Sans',sans-serif;font-size:20.0px;" fill="#ececec" stroke="#ececec" stroke-width=".5">♭</text></g><g transform="translate(27.5,82.7)"><text x="9.20" y="19.60" text-anchor="middle" style="font-family:'DejaVu Sans',sans-serif;font-size:13.5px;" fill="#ececec">(</text><text x="19.00" y="19.60" text-anchor="middle" style="font-family:'DejaVu Sans',sans-serif;font-size:13.5px;" fill="#ececec">)</text><text transform="translate(14.10,21.60) scale(0.80,1)" text-anchor="middle" style="font-family:'DejaVu Sans',sans-serif;font-size:19.0px;" fill="#ececec" stroke="#ececec" stroke-width=".5">♯</text></g><g transform="translate(55.5,82.7)"><text x="9.20" y="19.60" text-anchor="middle" style="font-family:'DejaVu Sans',sans-serif;font-size:13.5px;" fill="#ececec">(</text><text x="19.40" y="19.60" text-anchor="middle" style="font-family:'DejaVu Sans',sans-serif;font-size:13.5px;" fill="#ececec">)</text><text transform="translate(14.60,20.60) scale(0.90,1)" text-anchor="middle" style="font-family:'DejaVu Sans',sans-serif;font-size:18.0px;" fill="#ececec" stroke="#ececec" stroke-width=".5">♭</text></g><g transform="translate(83.5,82.7)"><text x="9.20" y="19.60" text-anchor="middle" style="font-family:'DejaVu Sans',sans-serif;font-size:13.5px;" fill="#ececec">(</text><text x="19.00" y="19.60" text-anchor="middle" style="font-family:'DejaVu Sans',sans-serif;font-size:13.5px;" fill="#ececec">)</text><text transform="translate(14.00,21.60) scale(0.80,1)" text-anchor="middle" style="font-family:'DejaVu Sans',sans-serif;font-size:19.0px;" fill="#ececec" stroke="#ececec" stroke-width=".5">♮</text></g><g transform="translate(111.5,82.7)"><text x="9.20" y="18.00" text-anchor="middle" style="font-family:'DejaVu Sans',sans-serif;font-size:10.5px;" fill="#ececec">(</text><text x="18.80" y="18.00" text-anchor="middle" style="font-family:'DejaVu Sans',sans-serif;font-size:10.5px;" fill="#ececec">)</text><path d="M12.0,12.4 L16.0,16.4 M16.0,12.4 L12.0,16.4" stroke="#ececec" stroke-width="1.40" fill="none" stroke-linecap="butt" stroke-linejoin="round"/><circle cx="12.00" cy="12.40" r="0.80" fill="#ececec"/><circle cx="16.00" cy="12.40" r="0.80" fill="#ececec"/><circle cx="12.00" cy="16.40" r="0.80" fill="#ececec"/><circle cx="16.00" cy="16.40" r="0.80" fill="#ececec"/></g><g transform="translate(139.5,82.7)"><text x="6.60" y="19.60" text-anchor="middle" style="font-family:'DejaVu Sans',sans-serif;font-size:13.5px;" fill="#ececec">(</text><text x="21.40" y="19.60" text-anchor="middle" style="font-family:'DejaVu Sans',sans-serif;font-size:13.5px;" fill="#ececec">)</text><text transform="translate(12.00,20.60) scale(0.85,1)" text-anchor="middle" style="font-family:'DejaVu Sans',sans-serif;font-size:18.0px;" fill="#ececec" stroke="#ececec" stroke-width=".5">♭</text><text transform="translate(15.80,20.60) scale(0.85,1)" text-anchor="middle" style="font-family:'DejaVu Sans',sans-serif;font-size:18.0px;" fill="#ececec" stroke="#ececec" stroke-width=".5">♭</text></g><g transform="translate(195.5,82.7)"><path d="M9.60,17.00 L19.00,9.60" stroke="#ececec" stroke-width="1.20" stroke-linecap="butt" fill="none"/></g><g transform="translate(223.5,82.7)"><path d="M11.2,21.6 L11.2,14.2 L17.6,8.6" stroke="#ececec" stroke-width="1.30" fill="none" stroke-linecap="butt" stroke-linejoin="round"/></g><rect x="27" y="0" width="1" height="112" fill="#7c7c7c"/><rect x="55" y="0" width="1" height="112" fill="#7c7c7c"/><rect x="83" y="0" width="1" height="112" fill="#7c7c7c"/><rect x="111" y="0" width="1" height="112" fill="#7c7c7c"/><rect x="139" y="0" width="1" height="112" fill="#7c7c7c"/><rect x="167" y="0" width="1" height="112" fill="#7c7c7c"/><rect x="195" y="0" width="1" height="112" fill="#7c7c7c"/><rect x="223" y="0" width="1" height="112" fill="#7c7c7c"/><rect x="0" y="27" width="253" height="1" fill="#7c7c7c"/><rect x="0" y="55" width="253" height="1" fill="#7c7c7c"/><rect x="0" y="83" width="253" height="1" fill="#7c7c7c"/><rect x="0" y="111" width="253" height="1" fill="#7c7c7c"/></svg>
<div class="a" style="left:102px;top:114px;width:40px;height:22px;background:#3b3b3b;border:1px solid #222;border-right:2px solid #d0d0d0;border-bottom:2px solid #d0d0d0;text-align:center;font-weight:bold;font-size:13px;line-height:19px;color:#fff">C5</div>
<div class="a" style="left:183px;top:114px;width:22px;height:22px;border:1px solid #111;border-radius:3px;background:linear-gradient(180deg,#5a5a5a,#333)"></div>
<div class="a" style="left:207px;top:114px;width:21px;height:22px;border:1px solid #111;border-radius:3px;background:linear-gradient(180deg,#5a5a5a,#333)"></div>
<div class="a" style="left:228px;top:114px;width:21px;height:22px;border:1px solid #111;border-radius:3px;background:linear-gradient(180deg,#5a5a5a,#333)"></div>
<svg class="a" style="left:183px;top:114px" width="66" height="22" viewBox="0 0 66 22"><path d="M5.2,6.8 L16.2,10.8 L5.2,14.8" stroke="#ececec" stroke-width="1.20" fill="none" stroke-linecap="butt" stroke-linejoin="round"/><circle cx="34.6" cy="11" r="7.2" fill="none" stroke="#e6e6e6" stroke-width="1.2"/><circle cx="30.30" cy="11.40" r="1.10" fill="#e6e6e6"/><circle cx="31.56" cy="14.44" r="1.10" fill="#e6e6e6"/><circle cx="34.60" cy="15.70" r="1.10" fill="#e6e6e6"/><circle cx="37.64" cy="14.44" r="1.10" fill="#e6e6e6"/><circle cx="38.90" cy="11.40" r="1.10" fill="#e6e6e6"/><circle cx="55.4" cy="11" r="7.8" fill="#f0f0f0"/><rect x="54.3" y="9.2" width="2.4" height="7" fill="#333"/><circle cx="55.5" cy="6.4" r="1.4" fill="#333"/></svg>
</div></div>
<div class="panel" style="top:391px;height:83px"><span class="h">Groups</span><i class="mn"></i>
<div class="grid" style="top:21px;height:57px"><svg width="253" height="56" viewBox="0 0 253 56"><g transform="translate(-0.5,-0.5)"><path d="M8.40,16.00 L8.40,6.50" stroke="#ececec" stroke-width="1.00" stroke-linecap="butt" fill="none"/><ellipse cx="6.70" cy="16.50" rx="2.40" ry="1.80" transform="rotate(-25 6.70 16.50)" fill="#ececec"/><path d="M21.50,15.80 L21.50,6.30" stroke="#ececec" stroke-width="1.00" stroke-linecap="butt" fill="none"/><ellipse cx="19.80" cy="16.30" rx="2.40" ry="1.80" transform="rotate(-25 19.80 16.30)" fill="#ececec"/><circle cx="8.60" cy="20.90" r="0.55" fill="#ececec"/><circle cx="11.60" cy="20.90" r="0.55" fill="#ececec"/><circle cx="14.60" cy="20.90" r="0.55" fill="#ececec"/><circle cx="17.60" cy="20.90" r="0.55" fill="#ececec"/></g><g transform="translate(27.5,-0.5)"><path d="M8.50,16.00 L8.50,6.50" stroke="#ececec" stroke-width="1.00" stroke-linecap="butt" fill="none"/><ellipse cx="6.80" cy="16.50" rx="2.40" ry="1.80" transform="rotate(-25 6.80 16.50)" fill="#ececec"/><path d="M21.60,16.00 L21.60,6.50" stroke="#ececec" stroke-width="1.00" stroke-linecap="butt" fill="none"/><ellipse cx="19.90" cy="16.50" rx="2.40" ry="1.80" transform="rotate(-25 19.90 16.50)" fill="#ececec"/><path d="M6.4,19.2 Q13.4,25.2 20.4,19.2 Q13.4,23.4 6.4,19.2Z" fill="#ececec"/><path d="M6.4,19.2 Q13.4,24.4 20.4,19.2" stroke="#ececec" stroke-width="0.50" fill="none" stroke-linecap="round" stroke-linejoin="round"/></g><g transform="translate(55.5,-0.5)"><path d="M8.30,20.20 L8.30,9.10" stroke="#ececec" stroke-width="1.00" stroke-linecap="butt" fill="none"/><ellipse cx="6.60" cy="20.70" rx="2.40" ry="1.80" transform="rotate(-25 6.60 20.70)" fill="#ececec"/><path d="M14.60,18.60 L14.60,8.10" stroke="#ececec" stroke-width="1.00" stroke-linecap="butt" fill="none"/><ellipse cx="12.90" cy="19.10" rx="2.40" ry="1.80" transform="rotate(-25 12.90 19.10)" fill="#ececec"/><path d="M20.90,17.00 L20.90,7.10" stroke="#ececec" stroke-width="1.00" stroke-linecap="butt" fill="none"/><ellipse cx="19.20" cy="17.50" rx="2.40" ry="1.80" transform="rotate(-25 19.20 17.50)" fill="#ececec"/><circle cx="9.40" cy="7.00" r="0.50" fill="#ececec"/><circle cx="12.20" cy="6.25" r="0.50" fill="#ececec"/><circle cx="15.00" cy="5.50" r="0.50" fill="#ececec"/><circle cx="17.80" cy="5.55" r="0.50" fill="#ececec"/><circle cx="20.60" cy="5.60" r="0.50" fill="#ececec"/></g><g transform="translate(83.5,-0.5)"><path d="M8.30,20.40 L8.30,9.70" stroke="#ececec" stroke-width="1.00" stroke-linecap="butt" fill="none"/><ellipse cx="6.60" cy="20.90" rx="2.40" ry="1.80" transform="rotate(-25 6.60 20.90)" fill="#ececec"/><path d="M14.60,18.90 L14.60,8.80" stroke="#ececec" stroke-width="1.00" stroke-linecap="butt" fill="none"/><ellipse cx="12.90" cy="19.40" rx="2.40" ry="1.80" transform="rotate(-25 12.90 19.40)" fill="#ececec"/><path d="M20.90,17.40 L20.90,7.90" stroke="#ececec" stroke-width="1.00" stroke-linecap="butt" fill="none"/><ellipse cx="19.20" cy="17.90" rx="2.40" ry="1.80" transform="rotate(-25 19.20 17.90)" fill="#ececec"/><path d="M8.0,9.8 L20.7,7.0" stroke="#ececec" stroke-width="1.50" fill="none" stroke-linecap="butt" stroke-linejoin="round"/><path d="M9.0,7.4 Q14.0,2.8 21.0,5.6" stroke="#ececec" stroke-width="1.00" fill="none" stroke-linecap="round" stroke-linejoin="round"/></g><g transform="translate(111.5,-0.5)"><path d="M8.20,20.50 L8.20,11.00" stroke="#ececec" stroke-width="1.00" stroke-linecap="butt" fill="none"/><ellipse cx="6.50" cy="21.00" rx="2.40" ry="1.80" transform="rotate(-25 6.50 21.00)" fill="#ececec"/><path d="M21.90,13.90 L21.90,4.80" stroke="#ececec" stroke-width="1.00" stroke-linecap="butt" fill="none"/><ellipse cx="20.20" cy="14.40" rx="2.40" ry="1.80" transform="rotate(-25 20.20 14.40)" fill="#ececec"/><path d="M9.60,19.40 L17.40,15.60" stroke="#ececec" stroke-width="0.80" stroke-linecap="butt" fill="none"/></g><g transform="translate(139.5,-0.5)"><path d="M8.20,20.50 L8.20,11.00" stroke="#ececec" stroke-width="1.00" stroke-linecap="butt" fill="none"/><ellipse cx="6.50" cy="21.00" rx="2.40" ry="1.80" transform="rotate(-25 6.50 21.00)" fill="#ececec"/><path d="M21.90,13.90 L21.90,4.80" stroke="#ececec" stroke-width="1.00" stroke-linecap="butt" fill="none"/><ellipse cx="20.20" cy="14.40" rx="2.40" ry="1.80" transform="rotate(-25 20.20 14.40)" fill="#ececec"/><path d="M9.4,19.6 l1.3,-1.5 l0.7,0.8 l1.3,-1.5 l0.7,0.8 l1.3,-1.5 l0.7,0.8 l1.3,-1.5" stroke="#ececec" stroke-width="1.50" fill="none" stroke-linecap="round" stroke-linejoin="round"/></g><g transform="translate(167.5,-0.5)"><path d="M8.40,20.70 L8.40,12.40" stroke="#ececec" stroke-width="1.00" stroke-linecap="butt" fill="none"/><ellipse cx="6.70" cy="21.20" rx="2.40" ry="1.80" transform="rotate(-25 6.70 21.20)" fill="#ececec"/><path d="M14.90,20.70 L14.90,12.40" stroke="#ececec" stroke-width="1.00" stroke-linecap="butt" fill="none"/><ellipse cx="13.20" cy="21.20" rx="2.40" ry="1.80" transform="rotate(-25 13.20 21.20)" fill="#ececec"/><path d="M21.50,20.70 L21.50,12.40" stroke="#ececec" stroke-width="1.00" stroke-linecap="butt" fill="none"/><ellipse cx="19.80" cy="21.20" rx="2.40" ry="1.80" transform="rotate(-25 19.80 21.20)" fill="#ececec"/><path d="M7.60,12.30 L21.90,12.30" stroke="#ececec" stroke-width="1.40" stroke-linecap="butt" fill="none"/><text x="14.50" y="10.00" text-anchor="middle" style="font-family:'Liberation Sans',sans-serif;font-size:7.6px;font-weight:bold" fill="#ececec">3</text></g><g transform="translate(195.5,-0.5)"><path d="M8.40,20.70 L8.40,12.40" stroke="#ececec" stroke-width="1.00" stroke-linecap="butt" fill="none"/><ellipse cx="6.70" cy="21.20" rx="2.40" ry="1.80" transform="rotate(-25 6.70 21.20)" fill="#ececec"/><path d="M14.90,20.70 L14.90,12.40" stroke="#ececec" stroke-width="1.00" stroke-linecap="butt" fill="none"/><ellipse cx="13.20" cy="21.20" rx="2.40" ry="1.80" transform="rotate(-25 13.20 21.20)" fill="#ececec"/><path d="M21.50,20.70 L21.50,12.40" stroke="#ececec" stroke-width="1.00" stroke-linecap="butt" fill="none"/><ellipse cx="19.80" cy="21.20" rx="2.40" ry="1.80" transform="rotate(-25 19.80 21.20)" fill="#ececec"/><path d="M7.60,12.30 L21.90,12.30" stroke="#ececec" stroke-width="1.40" stroke-linecap="butt" fill="none"/><text x="13.60" y="10.00" text-anchor="middle" style="font-family:'Liberation Sans',sans-serif;font-size:7.6px;font-weight:bold" fill="#ececec">3</text><circle cx="17.60" cy="9.60" r="0.45" fill="#ececec"/><circle cx="19.40" cy="9.60" r="0.45" fill="#ececec"/><circle cx="21.20" cy="10.40" r="0.40" fill="#ececec"/></g><g transform="translate(223.5,-0.5)"><text x="4.60" y="19.80" text-anchor="start" style="font-family:'Liberation Serif',serif;font-size:17.5px;font-weight:bold;font-style:italic" fill="#ececec">8</text><text x="12.60" y="13.60" text-anchor="start" style="font-family:'Liberation Serif',serif;font-size:9.5px;font-weight:bold;font-style:italic" fill="#ececec">va</text></g><g transform="translate(-0.5,27.5)"><text x="4.60" y="19.80" text-anchor="start" style="font-family:'Liberation Serif',serif;font-size:17.5px;font-weight:bold;font-style:italic" fill="#ececec">8</text><text x="12.60" y="13.60" text-anchor="start" style="font-family:'Liberation Serif',serif;font-size:9.5px;font-weight:bold;font-style:italic" fill="#ececec">vb</text></g><g transform="translate(27.5,27.5)"><path d="M4.9,11.6 V18.4" stroke="#ececec" stroke-width="1.00" fill="none" stroke-linecap="butt" stroke-linejoin="round"/><path d="M5.2,17.9 L21.5,12.1" stroke="#ececec" stroke-width="1.00" fill="none" stroke-linecap="butt" stroke-linejoin="round"/><path d="M21.4,11.8 V18.4" stroke="#ececec" stroke-width="1.70" fill="none" stroke-linecap="butt" stroke-linejoin="round"/></g><g transform="translate(55.5,27.5)"><path d="M5.3,11.6 V17.9 H10.8 L14,12.6 L17.1,17.9 H22.4 V11.6" stroke="#ececec" stroke-width="1.00" fill="none" stroke-linecap="butt" stroke-linejoin="round"/></g><g transform="translate(83.5,27.5)"><text x="3.60" y="18.40" text-anchor="start" style="font-family:'Liberation Serif',serif;font-size:11.5px;font-style:italic;font-weight:bold" fill="#ececec">Ped.</text><path d="M20.6,21.0h5.4l-2.7,4.2Z" fill="#ececec"/></g><g transform="translate(111.5,27.5)"><text x="5.60" y="19.80" text-anchor="middle" style="font-family:'DejaVu Sans',sans-serif;font-size:14.5px;" fill="#ececec">(</text><text x="22.40" y="19.80" text-anchor="middle" style="font-family:'DejaVu Sans',sans-serif;font-size:14.5px;" fill="#ececec">)</text><path d="M11.60,17.00 L11.60,7.90" stroke="#ececec" stroke-width="1.00" stroke-linecap="butt" fill="none"/><ellipse cx="9.90" cy="17.50" rx="2.40" ry="1.80" transform="rotate(-25 9.90 17.50)" fill="#ececec"/><path d="M17.30,14.00 L17.30,5.60" stroke="#ececec" stroke-width="1.00" stroke-linecap="butt" fill="none"/><ellipse cx="15.60" cy="14.50" rx="2.40" ry="1.80" transform="rotate(-25 15.60 14.50)" fill="#ececec"/></g><g transform="translate(139.5,27.5)"><path d="M6.00,14.50 L22.20,14.50" stroke="#ececec" stroke-width="1.00" stroke-linecap="butt" fill="none"/><circle cx="6.40" cy="14.50" r="0.90" fill="#ececec"/><path d="M11.40,12.60 L11.40,17.40" stroke="#ececec" stroke-width="1.00" stroke-linecap="butt" fill="none"/><path d="M14.35,12.60 L14.35,17.40" stroke="#ececec" stroke-width="1.00" stroke-linecap="butt" fill="none"/><path d="M17.30,12.60 L17.30,17.40" stroke="#ececec" stroke-width="1.00" stroke-linecap="butt" fill="none"/><path d="M20.25,12.60 L20.25,17.40" stroke="#ececec" stroke-width="1.00" stroke-linecap="butt" fill="none"/></g><g transform="translate(167.5,27.5)"><text x="12.60" y="18.60" text-anchor="middle" style="font-family:'Liberation Sans',sans-serif;font-size:14.5px;" fill="#ececec">{</text></g><g transform="translate(195.5,27.5)"><text x="13.40" y="18.60" text-anchor="middle" style="font-family:'Liberation Sans',sans-serif;font-size:14.5px;" fill="#ececec">[</text></g><rect x="27" y="0" width="1" height="56" fill="#7c7c7c"/><rect x="55" y="0" width="1" height="56" fill="#7c7c7c"/><rect x="83" y="0" width="1" height="56" fill="#7c7c7c"/><rect x="111" y="0" width="1" height="56" fill="#7c7c7c"/><rect x="139" y="0" width="1" height="56" fill="#7c7c7c"/><rect x="167" y="0" width="1" height="56" fill="#7c7c7c"/><rect x="195" y="0" width="1" height="56" fill="#7c7c7c"/><rect x="223" y="0" width="1" height="56" fill="#7c7c7c"/><rect x="0" y="27" width="253" height="1" fill="#7c7c7c"/><rect x="0" y="55" width="253" height="1" fill="#7c7c7c"/></svg></div></div>
<div class="panel" style="top:480px;height:139px"><span class="h">Articulations</span><i class="mn"></i>
<div class="grid" style="top:21px;height:113px"><svg width="253" height="112" viewBox="0 0 253 112"><g transform="translate(-0.5,-1.5)"><path d="M8.6,10.6 L18.6,13.4 L8.6,16.2" stroke="#ececec" stroke-width="1.00" fill="none" stroke-linecap="butt" stroke-linejoin="round"/></g><g transform="translate(27.5,-1.5)"><path d="M8.6,9.2 L18.6,12 L8.6,14.8" stroke="#ececec" stroke-width="1.00" fill="none" stroke-linecap="butt" stroke-linejoin="round"/><circle cx="14.00" cy="16.80" r="0.90" fill="#ececec"/></g><g transform="translate(55.5,-1.5)"><path d="M8.6,8.8 L18.6,11.6 L8.6,14.4" stroke="#ececec" stroke-width="1.00" fill="none" stroke-linecap="butt" stroke-linejoin="round"/><path d="M8.60,17.20 L18.60,17.20" stroke="#ececec" stroke-width="1.00" stroke-linecap="butt" fill="none"/></g><g transform="translate(83.5,-1.5)"><path d="M11.6,17.8 L13.6,9.2" stroke="#ececec" stroke-width="0.80" fill="none" stroke-linecap="butt" stroke-linejoin="round"/><path d="M13.6,9.2 L16.8,17.8" stroke="#ececec" stroke-width="1.70" fill="none" stroke-linecap="butt" stroke-linejoin="round"/></g><g transform="translate(111.5,-1.5)"><path d="M11.8,16.4 L13.6,8.4" stroke="#ececec" stroke-width="0.80" fill="none" stroke-linecap="butt" stroke-linejoin="round"/><path d="M13.6,8.4 L16.6,16.4" stroke="#ececec" stroke-width="1.60" fill="none" stroke-linecap="butt" stroke-linejoin="round"/><circle cx="13.00" cy="17.60" r="1.00" fill="#ececec"/></g><g transform="translate(139.5,-1.5)"><path d="M11.4,16.2 L13.6,8.0" stroke="#ececec" stroke-width="0.80" fill="none" stroke-linecap="butt" stroke-linejoin="round"/><path d="M13.6,8.0 L16.8,16.2" stroke="#ececec" stroke-width="1.70" fill="none" stroke-linecap="butt" stroke-linejoin="round"/><path d="M10.80,17.60 L17.60,17.60" stroke="#ececec" stroke-width="0.90" stroke-linecap="butt" fill="none"/></g><g transform="translate(167.5,-1.5)"><path d="M10.40,11.40 L18.60,11.40" stroke="#ececec" stroke-width="1.10" stroke-linecap="butt" fill="none"/><path d="M13.2,13.6h2.8v2.6h-2.8Z" fill="#ececec"/></g><g transform="translate(195.5,-1.5)"><path d="M11.2,9.6h6.2l-2.2,8.4h-1.8Z" fill="#ececec"/></g><g transform="translate(223.5,-1.5)"><path d="M12.0,10.2h5.6l-2.8,7.2Z" fill="#ececec"/></g><g transform="translate(-0.5,26.5)"><circle cx="13.60" cy="14.40" r="1.65" fill="#ececec"/></g><g transform="translate(27.5,26.5)"><path d="M9.80,14.50 L17.60,14.50" stroke="#ececec" stroke-width="2.30" stroke-linecap="butt" fill="none"/></g><g transform="translate(55.5,26.5)"><path d="M11.2,10.2 L13.9,19.6 L16.6,10.2" stroke="#ececec" stroke-width="0.80" fill="none" stroke-linecap="butt" stroke-linejoin="round"/></g><g transform="translate(83.5,26.5)"><path d="M10.0,10.4h8.2v8.0h-1.3v-4.8h-5.6v4.8h-1.3Z" fill="#ececec"/></g><g transform="translate(111.5,26.5)"><path d="M11.2,18.8 L13.9,9.4 L16.6,18.8" stroke="#ececec" stroke-width="0.80" fill="none" stroke-linecap="butt" stroke-linejoin="round"/></g><g transform="translate(139.5,26.5)"><path d="M9.6,10.4h1.3v4.8h5.6v-4.8h1.3v8.0h-8.2Z" fill="#ececec"/></g><g transform="translate(167.5,26.5)"><ellipse cx="13.80" cy="12.60" rx="1.50" ry="1.50" transform="rotate(0 13.80 12.60)" fill="none" stroke="#ececec" stroke-width="0.80"/><path d="M13.80,14.20 L13.80,17.00" stroke="#ececec" stroke-width="0.80" stroke-linecap="butt" fill="none"/></g><g transform="translate(195.5,26.5)"><ellipse cx="13.80" cy="14.40" rx="1.60" ry="1.60" transform="rotate(0 13.80 14.40)" fill="none" stroke="#ececec" stroke-width="0.90"/></g><g transform="translate(223.5,26.5)"><path d="M12.6,11.6 L16.8,13.6 L14.8,16.8 L10.6,14.6Z" stroke="#ececec" stroke-width="1.50" fill="none" stroke-linecap="butt" stroke-linejoin="round"/></g><g transform="translate(-0.5,54.5)"><path d="M8.6,13.9 H16.2 M12.4,10.2 V17.6" stroke="#ececec" stroke-width="0.90" fill="none" stroke-linecap="butt" stroke-linejoin="round"/></g><g transform="translate(27.5,54.5)"><path d="M10.60,16.40 L17.60,12.60" stroke="#ececec" stroke-width="1.70" stroke-linecap="butt" fill="none"/></g><g transform="translate(55.5,54.5)"><path d="M10.60,15.00 L17.60,11.60" stroke="#ececec" stroke-width="1.60" stroke-linecap="butt" fill="none"/><path d="M10.60,18.40 L17.60,15.00" stroke="#ececec" stroke-width="1.60" stroke-linecap="butt" fill="none"/></g><g transform="translate(83.5,54.5)"><path d="M10.80,12.80 L17.80,9.80" stroke="#ececec" stroke-width="1.50" stroke-linecap="butt" fill="none"/><path d="M10.80,16.00 L17.80,13.00" stroke="#ececec" stroke-width="1.50" stroke-linecap="butt" fill="none"/><path d="M10.80,19.20 L17.80,16.20" stroke="#ececec" stroke-width="1.50" stroke-linecap="butt" fill="none"/></g><g transform="translate(111.5,54.5)"><path d="M10.80,11.60 L17.80,8.60" stroke="#ececec" stroke-width="1.50" stroke-linecap="butt" fill="none"/><path d="M10.80,14.50 L17.80,11.50" stroke="#ececec" stroke-width="1.50" stroke-linecap="butt" fill="none"/><path d="M10.80,17.40 L17.80,14.40" stroke="#ececec" stroke-width="1.50" stroke-linecap="butt" fill="none"/><path d="M10.80,20.30 L17.80,17.30" stroke="#ececec" stroke-width="1.50" stroke-linecap="butt" fill="none"/></g><g transform="translate(139.5,54.5)"><path d="M13.6,5.8 L16.0,8.6 L11.6,12.4 L16.0,16.2 L11.6,20.0 L13.8,22.8" stroke="#ececec" stroke-width="2.60" fill="none" stroke-linecap="butt" stroke-linejoin="miter"/></g><g transform="translate(167.5,54.5)"><path d="M13.8,9 L16.0,11.2 L11.6,14.6 L16.0,18.0 L11.6,21.2 L13.6,23.2" stroke="#ececec" stroke-width="2.50" fill="none" stroke-linecap="butt" stroke-linejoin="miter"/><path d="M13.8,4.6 l3.6,5.6 h-7.2Z" fill="#ececec"/></g><g transform="translate(195.5,54.5)"><path d="M13.8,5.2 L16.0,7.4 L11.6,10.8 L16.0,14.2 L11.6,17.6 L13.8,19.4" stroke="#ececec" stroke-width="2.50" fill="none" stroke-linecap="butt" stroke-linejoin="miter"/><path d="M13.8,23.6 l3.6,-5.6 h-7.2Z" fill="#ececec"/></g><g transform="translate(223.5,54.5)"><path d="M5.8,13.6 C7.4,4.2 20.6,4.2 22.2,13.6 C19.6,7.2 8.4,7.2 5.8,13.6Z" fill="#ececec"/><circle cx="14.00" cy="12.40" r="1.20" fill="#ececec"/></g><g transform="translate(-0.5,82.5)"><path d="M5.6,13.0 C7.4,23.4 20.4,23.4 22.2,13.0 C19.6,19.6 8.2,19.6 5.6,13.0Z" fill="#ececec"/><circle cx="13.80" cy="14.60" r="1.20" fill="#ececec"/></g><g transform="translate(27.5,82.5)"><text x="3.60" y="18.60" text-anchor="start" style="font-family:'Liberation Serif',serif;font-size:11.5px;font-style:italic;font-weight:bold" fill="#ececec">Ped.</text></g><g transform="translate(55.5,82.5)"><text x="13.40" y="19.40" text-anchor="middle" style="font-family:'DejaVu Sans',sans-serif;font-size:12.5px;" fill="#ececec">❉</text></g><g transform="translate(83.5,82.5)"><text x="13.80" y="14.60" text-anchor="middle" style="font-family:'Liberation Serif',serif;font-size:21.0px;font-weight:bold" fill="#ececec">,</text></g><g transform="translate(111.5,82.5)"><path d="M8.80,19.40 L14.20,9.40" stroke="#ececec" stroke-width="1.40" stroke-linecap="butt" fill="none"/><path d="M12.80,19.40 L18.20,9.40" stroke="#ececec" stroke-width="1.40" stroke-linecap="butt" fill="none"/></g><g transform="translate(139.5,82.5)"><path d="M11.4,18.2 L13.6,10.2 L15.8,18.2" stroke="#bdbdbd" stroke-width="0.70" fill="none" stroke-linecap="butt" stroke-linejoin="round"/></g><g transform="translate(167.5,82.5)"><path d="M8.4,8.6 V14.6 A4.4,4.4 0 0 0 17.2,14.6 V8.6" stroke="#ececec" stroke-width="1.40" fill="none" stroke-linecap="butt" stroke-linejoin="round"/></g><g transform="translate(195.5,82.5)"><path d="M6.2,18.6 L8.2,11.6 L10.2,18.6" stroke="#ececec" stroke-width="0.80" fill="none" stroke-linecap="butt" stroke-linejoin="round"/><path d="M13.0,11 V15 A3.2,3.2 0 0 0 19.4,15 V11" stroke="#ececec" stroke-width="1.20" fill="none" stroke-linecap="butt" stroke-linejoin="round"/><path d="M6.6,10.6 Q13.4,3.6 20.4,10.6" stroke="#ececec" stroke-width="1.00" fill="none" stroke-linecap="round" stroke-linejoin="round"/></g><g transform="translate(223.5,82.5)"><path d="M18.0,18.6 L20.0,11.6 L22.0,18.6" stroke="#ececec" stroke-width="0.80" fill="none" stroke-linecap="butt" stroke-linejoin="round"/><path d="M8.4,11 V15 A3.2,3.2 0 0 0 14.8,15 V11" stroke="#ececec" stroke-width="1.20" fill="none" stroke-linecap="butt" stroke-linejoin="round"/><path d="M7.4,10.6 Q14.4,3.6 21.4,10.6" stroke="#ececec" stroke-width="1.00" fill="none" stroke-linecap="round" stroke-linejoin="round"/></g><rect x="27" y="0" width="1" height="112" fill="#7c7c7c"/><rect x="55" y="0" width="1" height="112" fill="#7c7c7c"/><rect x="83" y="0" width="1" height="112" fill="#7c7c7c"/><rect x="111" y="0" width="1" height="112" fill="#7c7c7c"/><rect x="139" y="0" width="1" height="112" fill="#7c7c7c"/><rect x="167" y="0" width="1" height="112" fill="#7c7c7c"/><rect x="195" y="0" width="1" height="112" fill="#7c7c7c"/><rect x="223" y="0" width="1" height="112" fill="#7c7c7c"/><rect x="0" y="27" width="253" height="1" fill="#7c7c7c"/><rect x="0" y="55" width="253" height="1" fill="#7c7c7c"/><rect x="0" y="83" width="253" height="1" fill="#7c7c7c"/><rect x="0" y="111" width="253" height="1" fill="#7c7c7c"/></svg></div></div>
<div class="panel c" style="top:625px"><span class="h">Ornaments</span><i class="sq"></i></div>
<div class="panel c" style="top:654px"><span class="h">Dynamics</span><i class="sq"></i></div>
<div class="panel c" style="top:683px"><span class="h">Bar Lines</span><i class="sq"></i></div>
<div class="panel c" style="top:712px"><span class="h">Clefs</span><i class="sq"></i></div>
<div class="panel c" style="top:741px"><span class="h">Graphics</span><i class="sq"></i></div>
<div class="panel c" style="top:770px"><span class="h">Note Heads</span><i class="sq"></i></div>
<div class="panel c" style="top:799px"><span class="h">Guitar</span><i class="sq"></i></div>
<div class="panel c" style="top:828px"><span class="h">Jazz</span><i class="sq"></i></div>
<div class="a" style="left:276px;top:98px;width:2px;height:760px;background:#aeaeae"></div>
<div class="a" style="left:278px;top:98px;width:2px;height:760px;background:#000"></div>
<div class="a" style="left:280px;top:98px;width:2px;height:760px;background:#b4b4b4"></div>
<div class="a" style="left:282px;top:98px;width:956px;height:760px;background:#4f4f4f"></div>
<div class="a" style="left:280px;top:98px;width:958px;height:2px;background:#bdbdbd"></div>
<div class="a" style="left:282px;top:107px;width:956px;height:8px;background:linear-gradient(180deg,#3e4650,#47505d)"></div>
<div class="a" style="left:282px;top:120px;width:956px;height:1px;background:#b5b5b5"></div>
<div class="a" style="left:447px;top:105px;width:40px;margin-left:-20px;text-align:center;font-size:11px;color:#d8d8d8">4</div>
<div class="a" style="left:607px;top:105px;width:40px;margin-left:-20px;text-align:center;font-size:11px;color:#d8d8d8">8</div>
<div class="a" style="left:767px;top:105px;width:40px;margin-left:-20px;text-align:center;font-size:11px;color:#d8d8d8">12</div>
<div class="a" style="left:927px;top:105px;width:40px;margin-left:-20px;text-align:center;font-size:11px;color:#d8d8d8">16</div>
<div class="a" style="left:1087px;top:105px;width:40px;margin-left:-20px;text-align:center;font-size:11px;color:#d8d8d8">20</div>
<div class="a" style="left:284px;top:100px;width:34px;height:19px;background:#444"></div>
<div class="a" style="left:286px;top:103px;width:12px;height:13px;background:#9a9a9a;border-radius:2px;text-align:center;font-size:12px;line-height:11px;font-weight:bold;color:#e8e8e8">-</div>
<div class="a" style="left:301px;top:103px;width:12px;height:13px;background:#9a9a9a;border-radius:2px;text-align:center;font-size:12px;line-height:12px;font-weight:bold;color:#e8e8e8">+</div>
<div class="a" style="left:321px;top:103px;width:12px;height:12px;border-radius:6px;background:linear-gradient(180deg,#bbb,#666)"></div>
<div class="a" style="left:292px;top:837px;width:946px;height:17px;background:#282828"></div>
<div class="a" style="left:312px;top:837px;width:423px;height:17px;background:linear-gradient(180deg,#bdbdbd 0,#8e8e8e 30%,#4a4a4a 75%,#333 100%)"></div>
<div class="a" style="left:292px;top:837px;width:20px;height:17px;background:linear-gradient(180deg,#dcdcdc,#a8a8a8);border:1px solid #e8e8e8;border-right-color:#888;border-bottom-color:#888"><svg class="a" style="left:5px;top:3px" width="8" height="10"><path d="M7,0L0,5L7,10Z" fill="#8a8a8a"/></svg></div>
<div class="a" style="left:0;top:857px;width:1238px;height:1px;background:#a8a8a8"></div>
<div class="a" style="left:282px;top:854px;width:956px;height:3px;background:#474747"></div>
<svg class="a" style="left:292px;top:131px" width="937" height="706" viewBox="292 131 937 706">
<defs><filter id="pt" x="0" y="0" width="100%" height="100%"><feTurbulence type="fractalNoise" baseFrequency="0.17 0.62" numOctaves="2" seed="7"/><feColorMatrix type="matrix" values="0 0 0 0 0.86  0 0 0 0 0.86  0 0 0 0 0.86  1.15 1.15 1.15 0 -1.3"/></filter></defs>
<rect x="292" y="131" width="937" height="706" fill="#fbfbfb"/>
<g transform="rotate(-12 760 480)"><rect x="100" y="-60" width="1320" height="1100" filter="url(#pt)"/></g>
<text x="347.3" y="198" style="font-family:'Liberation Serif',serif;font-size:15.4px" fill="#a9a9a9">[Header]</text>
<text x="1174.2" y="198" text-anchor="end" style="font-family:'Liberation Serif',serif;font-size:15.4px" fill="#a9a9a9">[Header]</text>
<text x="348.5" y="272.5" style="font-family:'Liberation Serif',serif;font-size:14.6px" fill="#a9a9a9">[Instructions]</text>
<text x="1174" y="272.5" text-anchor="end" style="font-family:'Liberation Serif',serif;font-size:14.6px" fill="#a9a9a9">[Composer]</text>
<text x="760" y="208.5" text-anchor="middle" style="font-family:'Liberation Serif',serif;font-size:28.3px;font-weight:bold" fill="#ababab">[Title]</text>
<rect x="499.2" y="498.3" width="233.3" height="31.6" fill="#d4dbe9"/>
<rect x="448.5" y="325.83" width="725.1" height="1.15" fill="#050505"/>
<rect x="448.5" y="333.83" width="725.1" height="1.15" fill="#050505"/>
<rect x="448.5" y="341.83" width="725.1" height="1.15" fill="#050505"/>
<rect x="448.5" y="349.83" width="725.1" height="1.15" fill="#050505"/>
<rect x="448.5" y="357.83" width="725.1" height="1.15" fill="#050505"/>
<rect x="448.5" y="403.73" width="725.1" height="1.15" fill="#050505"/>
<rect x="448.5" y="411.73" width="725.1" height="1.15" fill="#050505"/>
<rect x="448.5" y="419.73" width="725.1" height="1.15" fill="#050505"/>
<rect x="448.5" y="427.73" width="725.1" height="1.15" fill="#050505"/>
<rect x="448.5" y="435.73" width="725.1" height="1.15" fill="#050505"/>
<rect x="448.5" y="497.73" width="725.1" height="1.15" fill="#050505"/>
<rect x="448.5" y="505.73" width="725.1" height="1.15" fill="#050505"/>
<rect x="448.5" y="513.73" width="725.1" height="1.15" fill="#050505"/>
<rect x="448.5" y="521.73" width="725.1" height="1.15" fill="#050505"/>
<rect x="448.5" y="529.73" width="725.1" height="1.15" fill="#050505"/>
<rect x="448.5" y="575.93" width="725.1" height="1.15" fill="#050505"/>
<rect x="448.5" y="583.93" width="725.1" height="1.15" fill="#050505"/>
<rect x="448.5" y="591.93" width="725.1" height="1.15" fill="#050505"/>
<rect x="448.5" y="599.93" width="725.1" height="1.15" fill="#050505"/>
<rect x="448.5" y="607.93" width="725.1" height="1.15" fill="#050505"/>
<rect x="447.95" y="325.90" width="1.10" height="283.10" fill="#0a0a0a"/>
<rect x="732.15" y="325.90" width="1.10" height="283.10" fill="#0a0a0a"/>
<rect x="869.05" y="325.90" width="1.10" height="283.10" fill="#0a0a0a"/>
<rect x="1005.65" y="325.90" width="1.10" height="283.10" fill="#0a0a0a"/>
<rect x="1173.05" y="325.90" width="1.10" height="283.10" fill="#0a0a0a"/>
<path d="M447.81,326.24 L447.48,326.55 L447.04,326.93 L446.50,327.39 L445.90,327.93 L445.26,328.55 L444.63,329.27 L444.01,330.07 L443.48,330.96 L442.99,331.91 L442.52,332.92 L442.05,334.00 L441.61,335.16 L441.20,336.39 L440.84,337.70 L440.54,339.08 L440.31,340.53 L440.15,342.08 L440.06,343.72 L440.02,345.43 L440.03,347.18 L440.09,348.95 L440.17,350.69 L440.28,352.40 L440.41,354.04 L440.58,355.69 L440.81,357.35 L441.09,359.00 L441.39,360.60 L441.69,362.14 L441.97,363.59 L442.21,364.92 L442.41,366.12 L442.56,367.20 L442.70,368.17 L442.81,369.02 L442.91,369.78 L442.98,370.47 L443.02,371.11 L443.03,371.74 L443.01,372.40 L442.96,373.06 L442.89,373.69 L442.80,374.29 L442.69,374.86 L442.54,375.40 L442.36,375.93 L442.14,376.45 L441.88,376.96 L441.53,377.50 L441.06,378.09 L440.49,378.71 L439.88,379.32 L439.27,379.89 L438.70,380.41 L438.22,380.86 L437.88,381.19 L438.12,381.51 L438.53,381.27 L439.09,380.95 L439.77,380.58 L440.51,380.15 L441.28,379.68 L442.04,379.17 L442.73,378.62 L443.32,378.04 L443.79,377.45 L444.19,376.84 L444.53,376.20 L444.81,375.55 L445.06,374.87 L445.26,374.18 L445.43,373.46 L445.59,372.72 L445.72,371.96 L445.81,371.20 L445.86,370.43 L445.88,369.64 L445.88,368.81 L445.86,367.91 L445.83,366.92 L445.79,365.80 L445.73,364.53 L445.65,363.12 L445.54,361.62 L445.43,360.06 L445.31,358.47 L445.19,356.86 L445.08,355.27 L444.99,353.71 L444.91,352.11 L444.82,350.44 L444.73,348.74 L444.64,347.04 L444.57,345.37 L444.52,343.76 L444.49,342.24 L444.49,340.84 L444.52,339.53 L444.56,338.25 L444.62,337.02 L444.70,335.84 L444.81,334.72 L444.95,333.65 L445.12,332.64 L445.32,331.73 L445.58,330.89 L445.92,330.10 L446.32,329.35 L446.75,328.65 L447.19,328.01 L447.59,327.44 L447.94,326.95 L448.19,326.56Z M448.19,436.14 L447.94,435.75 L447.59,435.26 L447.19,434.69 L446.75,434.05 L446.32,433.35 L445.92,432.60 L445.58,431.81 L445.32,430.97 L445.12,430.06 L444.95,429.05 L444.81,427.98 L444.70,426.86 L444.62,425.68 L444.56,424.45 L444.52,423.17 L444.49,421.86 L444.49,420.46 L444.52,418.94 L444.57,417.33 L444.64,415.66 L444.73,413.96 L444.82,412.26 L444.91,410.59 L444.99,408.99 L445.08,407.43 L445.19,405.84 L445.31,404.23 L445.43,402.64 L445.54,401.08 L445.65,399.58 L445.73,398.17 L445.79,396.90 L445.83,395.78 L445.86,394.79 L445.88,393.89 L445.88,393.06 L445.86,392.27 L445.81,391.50 L445.72,390.74 L445.59,389.98 L445.43,389.24 L445.26,388.52 L445.06,387.83 L444.81,387.15 L444.53,386.50 L444.19,385.86 L443.79,385.25 L443.32,384.66 L442.73,384.08 L442.04,383.53 L441.28,383.02 L440.51,382.55 L439.77,382.12 L439.09,381.75 L438.53,381.43 L438.12,381.19 L437.88,381.51 L438.22,381.84 L438.70,382.29 L439.27,382.81 L439.88,383.38 L440.49,383.99 L441.06,384.61 L441.53,385.20 L441.88,385.74 L442.14,386.25 L442.36,386.77 L442.54,387.30 L442.69,387.84 L442.80,388.41 L442.89,389.01 L442.96,389.64 L443.01,390.30 L443.03,390.96 L443.02,391.59 L442.98,392.23 L442.91,392.92 L442.81,393.68 L442.70,394.53 L442.56,395.50 L442.41,396.58 L442.21,397.78 L441.97,399.11 L441.69,400.56 L441.39,402.10 L441.09,403.70 L440.81,405.35 L440.58,407.01 L440.41,408.66 L440.28,410.30 L440.17,412.01 L440.09,413.75 L440.03,415.52 L440.02,417.27 L440.06,418.98 L440.15,420.62 L440.31,422.17 L440.54,423.62 L440.84,425.00 L441.20,426.31 L441.61,427.54 L442.05,428.70 L442.52,429.78 L442.99,430.79 L443.48,431.74 L444.01,432.63 L444.63,433.43 L445.26,434.15 L445.90,434.77 L446.50,435.31 L447.04,435.77 L447.48,436.15 L447.81,436.46Z" fill="#000"/>
<path d="M447.81,498.14 L447.48,498.45 L447.04,498.83 L446.50,499.30 L445.90,499.84 L445.26,500.46 L444.63,501.17 L444.01,501.98 L443.48,502.88 L442.99,503.83 L442.52,504.84 L442.05,505.92 L441.61,507.08 L441.20,508.32 L440.84,509.64 L440.54,511.02 L440.31,512.47 L440.15,514.02 L440.06,515.67 L440.02,517.38 L440.03,519.14 L440.09,520.91 L440.17,522.66 L440.28,524.37 L440.41,526.02 L440.58,527.66 L440.81,529.33 L441.09,530.98 L441.39,532.59 L441.69,534.13 L441.97,535.59 L442.21,536.92 L442.41,538.13 L442.56,539.21 L442.70,540.18 L442.81,541.03 L442.91,541.79 L442.98,542.49 L443.02,543.13 L443.03,543.77 L443.01,544.42 L442.96,545.09 L442.89,545.73 L442.80,546.32 L442.69,546.89 L442.54,547.44 L442.36,547.97 L442.14,548.49 L441.88,549.01 L441.53,549.54 L441.05,550.14 L440.49,550.75 L439.88,551.36 L439.26,551.94 L438.70,552.46 L438.22,552.90 L437.88,553.24 L438.12,553.56 L438.53,553.32 L439.09,553.00 L439.77,552.63 L440.51,552.20 L441.28,551.73 L442.04,551.21 L442.73,550.66 L443.32,550.08 L443.79,549.48 L444.19,548.87 L444.53,548.24 L444.81,547.58 L445.06,546.90 L445.26,546.21 L445.43,545.49 L445.59,544.74 L445.72,543.98 L445.81,543.22 L445.86,542.45 L445.88,541.66 L445.88,540.82 L445.86,539.92 L445.83,538.93 L445.79,537.81 L445.73,536.53 L445.65,535.12 L445.54,533.62 L445.43,532.06 L445.31,530.45 L445.19,528.84 L445.08,527.25 L444.99,525.68 L444.91,524.08 L444.82,522.40 L444.73,520.70 L444.64,518.99 L444.57,517.32 L444.52,515.70 L444.49,514.18 L444.49,512.78 L444.52,511.46 L444.56,510.18 L444.62,508.95 L444.70,507.77 L444.81,506.64 L444.95,505.57 L445.12,504.56 L445.32,503.64 L445.58,502.80 L445.92,502.01 L446.32,501.26 L446.75,500.55 L447.19,499.91 L447.59,499.34 L447.94,498.85 L448.19,498.46Z M448.19,608.34 L447.94,607.95 L447.59,607.46 L447.19,606.89 L446.75,606.25 L446.32,605.54 L445.92,604.79 L445.58,604.00 L445.32,603.16 L445.12,602.24 L444.95,601.23 L444.81,600.16 L444.70,599.03 L444.62,597.85 L444.56,596.62 L444.52,595.34 L444.49,594.02 L444.49,592.62 L444.52,591.10 L444.57,589.48 L444.64,587.81 L444.73,586.10 L444.82,584.40 L444.91,582.72 L444.99,581.12 L445.08,579.55 L445.19,577.96 L445.31,576.35 L445.43,574.74 L445.54,573.18 L445.65,571.68 L445.73,570.27 L445.79,568.99 L445.83,567.87 L445.86,566.88 L445.88,565.98 L445.88,565.14 L445.86,564.35 L445.81,563.58 L445.72,562.82 L445.59,562.06 L445.43,561.31 L445.26,560.59 L445.06,559.90 L444.81,559.22 L444.53,558.56 L444.19,557.93 L443.79,557.32 L443.32,556.72 L442.73,556.14 L442.04,555.59 L441.28,555.07 L440.51,554.60 L439.77,554.17 L439.09,553.80 L438.53,553.48 L438.12,553.24 L437.88,553.56 L438.22,553.90 L438.70,554.34 L439.26,554.86 L439.88,555.44 L440.49,556.05 L441.05,556.66 L441.53,557.26 L441.88,557.79 L442.14,558.31 L442.36,558.83 L442.54,559.36 L442.69,559.91 L442.80,560.48 L442.89,561.07 L442.96,561.71 L443.01,562.38 L443.03,563.03 L443.02,563.67 L442.98,564.31 L442.91,565.01 L442.81,565.77 L442.70,566.62 L442.56,567.59 L442.41,568.67 L442.21,569.88 L441.97,571.21 L441.69,572.67 L441.39,574.21 L441.09,575.82 L440.81,577.47 L440.58,579.14 L440.41,580.78 L440.28,582.43 L440.17,584.14 L440.09,585.89 L440.03,587.66 L440.02,589.42 L440.06,591.13 L440.15,592.78 L440.31,594.33 L440.54,595.78 L440.84,597.16 L441.20,598.48 L441.61,599.72 L442.05,600.88 L442.52,601.96 L442.99,602.97 L443.48,603.92 L444.01,604.82 L444.63,605.63 L445.26,606.34 L445.90,606.96 L446.50,607.50 L447.04,607.97 L447.48,608.35 L447.81,608.66Z" fill="#000"/>
<path d="M463.35,352.27 L463.14,352.11 L462.86,351.93 L462.54,351.72 L462.21,351.48 L461.89,351.24 L461.62,350.99 L461.43,350.75 L461.32,350.55 L461.23,350.30 L461.14,349.98 L461.06,349.62 L461.01,349.25 L460.99,348.87 L461.00,348.50 L461.04,348.15 L461.12,347.84 L461.24,347.51 L461.41,347.15 L461.62,346.77 L461.86,346.40 L462.12,346.05 L462.40,345.74 L462.67,345.50 L462.93,345.31 L463.22,345.16 L463.56,345.02 L463.94,344.90 L464.34,344.81 L464.73,344.76 L465.11,344.74 L465.45,344.77 L465.73,344.83 L466.03,344.93 L466.36,345.08 L466.72,345.29 L467.07,345.53 L467.40,345.79 L467.70,346.08 L467.95,346.36 L468.14,346.63 L468.31,346.94 L468.48,347.32 L468.63,347.76 L468.76,348.23 L468.86,348.71 L468.93,349.19 L468.96,349.63 L468.96,350.04 L468.92,350.47 L468.85,350.94 L468.74,351.42 L468.59,351.91 L468.41,352.37 L468.20,352.80 L467.96,353.17 L467.70,353.49 L467.38,353.79 L466.96,354.10 L466.47,354.39 L465.93,354.66 L465.35,354.88 L464.77,355.05 L464.20,355.16 L463.67,355.20 L463.15,355.17 L462.60,355.08 L462.05,354.93 L461.51,354.73 L460.99,354.48 L460.51,354.20 L460.08,353.89 L459.70,353.56 L459.33,353.18 L458.97,352.73 L458.63,352.23 L458.32,351.71 L458.05,351.18 L457.85,350.65 L457.70,350.14 L457.62,349.68 L457.59,349.20 L457.60,348.63 L457.66,348.01 L457.77,347.33 L457.93,346.63 L458.12,345.91 L458.36,345.20 L458.60,344.52 L458.88,343.90 L459.22,343.26 L459.63,342.59 L460.09,341.90 L460.58,341.19 L461.10,340.45 L461.61,339.70 L462.11,338.96 L462.57,338.25 L463.03,337.55 L463.50,336.86 L463.98,336.15 L464.46,335.43 L464.93,334.69 L465.39,333.93 L465.81,333.15 L466.21,332.37 L466.59,331.58 L466.95,330.78 L467.30,329.96 L467.62,329.15 L467.91,328.35 L468.16,327.55 L468.36,326.77 L468.51,325.99 L468.61,325.24 L468.67,324.52 L468.68,323.81 L468.67,323.14 L468.63,322.49 L468.57,321.87 L468.49,321.25 L468.39,320.61 L468.24,319.96 L468.07,319.33 L467.89,318.73 L467.68,318.17 L467.48,317.65 L467.28,317.20 L467.08,316.81 L466.89,316.48 L466.69,316.19 L466.48,315.92 L466.24,315.68 L465.96,315.46 L465.62,315.30 L465.22,315.24 L464.87,315.32 L464.58,315.46 L464.33,315.65 L464.10,315.87 L463.87,316.13 L463.65,316.42 L463.42,316.76 L463.19,317.14 L462.96,317.56 L462.71,318.02 L462.42,318.54 L462.10,319.12 L461.77,319.75 L461.46,320.43 L461.18,321.15 L460.96,321.92 L460.81,322.72 L460.73,323.53 L460.70,324.36 L460.71,325.21 L460.76,326.10 L460.86,327.02 L460.98,327.97 L461.13,328.96 L461.31,330.01 L461.53,331.11 L461.82,332.26 L462.13,333.44 L462.48,334.65 L462.83,335.90 L463.18,337.18 L463.51,338.49 L463.81,339.82 L464.08,341.22 L464.34,342.70 L464.59,344.23 L464.83,345.79 L465.07,347.36 L465.31,348.92 L465.56,350.44 L465.81,351.91 L466.09,353.36 L466.39,354.84 L466.70,356.32 L467.01,357.76 L467.30,359.13 L467.56,360.39 L467.76,361.52 L467.90,362.48 L467.99,363.25 L468.03,363.85 L468.04,364.30 L468.01,364.63 L467.95,364.89 L467.87,365.13 L467.74,365.39 L467.58,365.70 L467.38,366.02 L467.14,366.33 L466.86,366.62 L466.54,366.90 L466.20,367.15 L465.85,367.38 L465.50,367.56 L465.17,367.69 L464.85,367.78 L464.49,367.84 L464.10,367.86 L463.71,367.86 L463.31,367.82 L462.92,367.76 L462.55,367.68 L462.22,367.58 L461.93,367.46 L461.63,367.27 L461.31,367.04 L460.98,366.78 L460.68,366.52 L460.39,366.27 L460.14,366.04 L459.93,365.87 L458.87,367.33 L459.05,367.45 L459.30,367.63 L459.62,367.86 L459.99,368.12 L460.40,368.38 L460.84,368.64 L461.30,368.86 L461.78,369.02 L462.24,369.12 L462.70,369.19 L463.19,369.23 L463.68,369.24 L464.18,369.22 L464.67,369.17 L465.16,369.06 L465.63,368.91 L466.07,368.71 L466.50,368.46 L466.93,368.17 L467.33,367.85 L467.72,367.50 L468.07,367.11 L468.37,366.71 L468.62,366.30 L468.81,365.93 L468.97,365.58 L469.10,365.21 L469.19,364.80 L469.23,364.34 L469.23,363.80 L469.18,363.14 L469.10,362.32 L468.95,361.32 L468.74,360.16 L468.48,358.88 L468.19,357.51 L467.88,356.07 L467.56,354.60 L467.26,353.13 L466.99,351.69 L466.74,350.24 L466.50,348.73 L466.26,347.18 L466.02,345.61 L465.77,344.04 L465.52,342.50 L465.26,341.00 L464.99,339.58 L464.68,338.21 L464.34,336.87 L463.99,335.58 L463.63,334.32 L463.29,333.12 L462.98,331.96 L462.71,330.85 L462.49,329.79 L462.32,328.77 L462.17,327.80 L462.06,326.88 L461.97,326.00 L461.92,325.17 L461.91,324.37 L461.93,323.61 L461.99,322.88 L462.11,322.18 L462.28,321.50 L462.51,320.84 L462.76,320.20 L463.04,319.59 L463.32,319.02 L463.60,318.50 L463.84,318.04 L464.06,317.64 L464.26,317.30 L464.46,317.02 L464.65,316.79 L464.82,316.61 L464.98,316.51 L465.09,316.47 L465.13,316.48 L465.08,316.53 L464.97,316.56 L464.88,316.59 L464.83,316.66 L464.82,316.80 L464.83,317.01 L464.87,317.27 L464.92,317.59 L464.99,317.96 L465.08,318.40 L465.17,318.89 L465.26,319.40 L465.35,319.94 L465.42,320.49 L465.48,321.02 L465.51,321.55 L465.53,322.09 L465.54,322.65 L465.55,323.21 L465.54,323.76 L465.51,324.32 L465.46,324.88 L465.37,325.45 L465.24,326.03 L465.07,326.66 L464.86,327.33 L464.62,328.04 L464.34,328.76 L464.03,329.49 L463.70,330.23 L463.35,330.95 L462.99,331.65 L462.61,332.31 L462.20,332.96 L461.76,333.61 L461.29,334.28 L460.80,334.95 L460.30,335.64 L459.79,336.34 L459.29,337.04 L458.81,337.72 L458.29,338.40 L457.75,339.10 L457.19,339.83 L456.63,340.58 L456.10,341.38 L455.61,342.21 L455.20,343.08 L454.86,343.94 L454.55,344.80 L454.29,345.69 L454.08,346.60 L453.92,347.53 L453.84,348.46 L453.86,349.39 L453.98,350.32 L454.23,351.22 L454.59,352.06 L455.03,352.84 L455.53,353.56 L456.09,354.23 L456.67,354.83 L457.28,355.36 L457.90,355.84 L458.57,356.25 L459.28,356.59 L460.01,356.87 L460.76,357.08 L461.51,357.24 L462.26,357.34 L463.00,357.40 L463.73,357.40 L464.46,357.35 L465.22,357.24 L465.98,357.09 L466.74,356.88 L467.48,356.63 L468.20,356.32 L468.87,355.95 L469.50,355.51 L470.06,354.99 L470.55,354.41 L470.99,353.79 L471.36,353.13 L471.67,352.45 L471.93,351.76 L472.12,351.06 L472.24,350.36 L472.29,349.63 L472.27,348.89 L472.18,348.15 L472.03,347.42 L471.82,346.71 L471.56,346.03 L471.24,345.38 L470.86,344.77 L470.41,344.21 L469.90,343.72 L469.35,343.28 L468.77,342.90 L468.16,342.58 L467.54,342.31 L466.91,342.11 L466.27,341.97 L465.61,341.92 L464.96,341.95 L464.31,342.04 L463.69,342.19 L463.09,342.39 L462.51,342.64 L461.97,342.94 L461.47,343.29 L461.01,343.70 L460.59,344.16 L460.22,344.66 L459.90,345.19 L459.62,345.73 L459.39,346.28 L459.21,346.82 L459.08,347.36 L459.01,347.91 L458.99,348.47 L459.03,349.01 L459.11,349.55 L459.24,350.07 L459.41,350.56 L459.62,351.01 L459.88,351.45 L460.24,351.86 L460.67,352.18 L461.11,352.44 L461.56,352.64 L461.98,352.81 L462.35,352.94 L462.64,353.05 L462.85,353.13Z M457.80,364.20 a3.00,3.00 0 1,0 6.00,0 a3.00,3.00 0 1,0 -6.00,0Z" fill="#000"/>
<path d="M455.00,410.74 L454.98,410.53 L454.94,410.25 L454.90,409.94 L454.86,409.60 L454.84,409.27 L454.85,408.96 L454.89,408.70 L454.97,408.50 L455.08,408.28 L455.24,408.04 L455.43,407.79 L455.66,407.54 L455.90,407.30 L456.17,407.08 L456.45,406.88 L456.75,406.71 L457.07,406.55 L457.43,406.40 L457.82,406.26 L458.23,406.14 L458.65,406.05 L459.08,405.99 L459.49,405.97 L459.88,406.00 L460.29,406.07 L460.71,406.17 L461.13,406.31 L461.54,406.48 L461.93,406.68 L462.29,406.89 L462.59,407.13 L462.86,407.37 L463.10,407.64 L463.33,407.95 L463.56,408.29 L463.76,408.65 L463.93,409.02 L464.09,409.39 L464.21,409.75 L464.30,410.09 L464.38,410.44 L464.44,410.81 L464.49,411.21 L464.52,411.62 L464.53,412.06 L464.52,412.51 L464.49,412.98 L464.43,413.46 L464.35,413.97 L464.24,414.52 L464.10,415.10 L463.94,415.70 L463.75,416.31 L463.53,416.91 L463.28,417.50 L463.01,418.06 L462.71,418.60 L462.36,419.15 L461.97,419.71 L461.54,420.27 L461.09,420.82 L460.63,421.36 L460.17,421.87 L459.72,422.37 L459.28,422.83 L458.84,423.26 L458.39,423.68 L457.93,424.07 L457.46,424.46 L456.99,424.83 L456.52,425.20 L456.06,425.55 L455.57,425.90 L455.04,426.25 L454.49,426.60 L453.95,426.93 L453.43,427.24 L452.96,427.52 L452.56,427.75 L452.26,427.93 L452.54,428.47 L452.85,428.34 L453.28,428.17 L453.79,427.97 L454.35,427.74 L454.96,427.49 L455.57,427.22 L456.18,426.94 L456.74,426.65 L457.28,426.36 L457.82,426.05 L458.36,425.74 L458.90,425.40 L459.44,425.04 L459.99,424.67 L460.54,424.26 L461.08,423.83 L461.62,423.38 L462.18,422.91 L462.74,422.41 L463.31,421.88 L463.86,421.33 L464.40,420.76 L464.91,420.16 L465.39,419.54 L465.82,418.91 L466.23,418.26 L466.61,417.58 L466.96,416.90 L467.28,416.21 L467.55,415.51 L467.78,414.82 L467.97,414.14 L468.10,413.47 L468.19,412.79 L468.23,412.12 L468.23,411.45 L468.18,410.79 L468.07,410.15 L467.91,409.52 L467.70,408.91 L467.42,408.31 L467.09,407.75 L466.70,407.23 L466.28,406.75 L465.83,406.30 L465.35,405.90 L464.86,405.55 L464.34,405.23 L463.80,404.97 L463.24,404.77 L462.67,404.61 L462.10,404.51 L461.53,404.44 L460.98,404.40 L460.44,404.39 L459.92,404.40 L459.40,404.44 L458.88,404.51 L458.36,404.62 L457.86,404.74 L457.37,404.90 L456.90,405.07 L456.46,405.27 L456.05,405.49 L455.67,405.74 L455.31,406.03 L454.98,406.33 L454.68,406.66 L454.41,407.00 L454.18,407.36 L453.99,407.72 L453.83,408.10 L453.75,408.53 L453.75,408.96 L453.80,409.38 L453.89,409.77 L453.99,410.13 L454.08,410.44 L454.16,410.68 L454.20,410.86Z M453.70,411.00 a3.10,3.10 0 1,0 6.20,0 a3.10,3.10 0 1,0 -6.20,0Z M470.00,408.50 a1.60,1.60 0 1,0 3.20,0 a1.60,1.60 0 1,0 -3.20,0Z M470.00,415.50 a1.60,1.60 0 1,0 3.20,0 a1.60,1.60 0 1,0 -3.20,0Z" fill="#000"/>
<path d="M463.35,524.17 L463.14,524.01 L462.86,523.83 L462.54,523.62 L462.21,523.38 L461.89,523.14 L461.62,522.89 L461.43,522.65 L461.32,522.45 L461.23,522.20 L461.14,521.88 L461.06,521.52 L461.01,521.15 L460.99,520.77 L461.00,520.40 L461.04,520.05 L461.12,519.74 L461.24,519.41 L461.41,519.05 L461.62,518.67 L461.86,518.30 L462.12,517.95 L462.40,517.64 L462.67,517.40 L462.93,517.21 L463.22,517.06 L463.56,516.92 L463.94,516.80 L464.34,516.71 L464.73,516.66 L465.11,516.64 L465.45,516.67 L465.73,516.73 L466.03,516.83 L466.36,516.98 L466.72,517.19 L467.07,517.43 L467.40,517.69 L467.70,517.98 L467.95,518.26 L468.14,518.53 L468.31,518.84 L468.48,519.22 L468.63,519.66 L468.76,520.13 L468.86,520.61 L468.93,521.09 L468.96,521.53 L468.96,521.94 L468.92,522.37 L468.85,522.84 L468.74,523.32 L468.59,523.81 L468.41,524.27 L468.20,524.70 L467.96,525.07 L467.70,525.39 L467.38,525.69 L466.96,526.00 L466.47,526.29 L465.93,526.56 L465.35,526.78 L464.77,526.95 L464.20,527.06 L463.67,527.10 L463.15,527.07 L462.60,526.98 L462.05,526.83 L461.51,526.63 L460.99,526.38 L460.51,526.10 L460.08,525.79 L459.70,525.46 L459.33,525.08 L458.97,524.63 L458.63,524.13 L458.32,523.61 L458.05,523.08 L457.85,522.55 L457.70,522.04 L457.62,521.58 L457.59,521.10 L457.60,520.53 L457.66,519.91 L457.77,519.23 L457.93,518.53 L458.12,517.81 L458.36,517.10 L458.60,516.42 L458.88,515.80 L459.22,515.16 L459.63,514.49 L460.09,513.80 L460.58,513.09 L461.10,512.35 L461.61,511.60 L462.11,510.86 L462.57,510.15 L463.03,509.45 L463.50,508.76 L463.98,508.05 L464.46,507.33 L464.93,506.59 L465.39,505.83 L465.81,505.05 L466.21,504.27 L466.59,503.48 L466.95,502.68 L467.30,501.86 L467.62,501.05 L467.91,500.25 L468.16,499.45 L468.36,498.67 L468.51,497.89 L468.61,497.14 L468.67,496.42 L468.68,495.71 L468.67,495.04 L468.63,494.39 L468.57,493.77 L468.49,493.15 L468.39,492.51 L468.24,491.86 L468.07,491.23 L467.89,490.63 L467.68,490.07 L467.48,489.55 L467.28,489.10 L467.08,488.71 L466.89,488.38 L466.69,488.09 L466.48,487.82 L466.24,487.58 L465.96,487.36 L465.62,487.20 L465.22,487.14 L464.87,487.22 L464.58,487.36 L464.33,487.55 L464.10,487.77 L463.87,488.03 L463.65,488.32 L463.42,488.66 L463.19,489.04 L462.96,489.46 L462.71,489.92 L462.42,490.44 L462.10,491.02 L461.77,491.65 L461.46,492.33 L461.18,493.05 L460.96,493.82 L460.81,494.62 L460.73,495.43 L460.70,496.26 L460.71,497.11 L460.76,498.00 L460.86,498.92 L460.98,499.87 L461.13,500.86 L461.31,501.91 L461.53,503.01 L461.82,504.16 L462.13,505.34 L462.48,506.55 L462.83,507.80 L463.18,509.08 L463.51,510.39 L463.81,511.72 L464.08,513.12 L464.34,514.60 L464.59,516.13 L464.83,517.69 L465.07,519.26 L465.31,520.82 L465.56,522.34 L465.81,523.81 L466.09,525.26 L466.39,526.74 L466.70,528.22 L467.01,529.66 L467.30,531.03 L467.56,532.29 L467.76,533.42 L467.90,534.38 L467.99,535.15 L468.03,535.75 L468.04,536.20 L468.01,536.53 L467.95,536.79 L467.87,537.03 L467.74,537.29 L467.58,537.60 L467.38,537.92 L467.14,538.23 L466.86,538.52 L466.54,538.80 L466.20,539.05 L465.85,539.28 L465.50,539.46 L465.17,539.59 L464.85,539.68 L464.49,539.74 L464.10,539.76 L463.71,539.76 L463.31,539.72 L462.92,539.66 L462.55,539.58 L462.22,539.48 L461.93,539.36 L461.63,539.17 L461.31,538.94 L460.98,538.68 L460.68,538.42 L460.39,538.17 L460.14,537.94 L459.93,537.77 L458.87,539.23 L459.05,539.35 L459.30,539.53 L459.62,539.76 L459.99,540.02 L460.40,540.28 L460.84,540.54 L461.30,540.76 L461.78,540.92 L462.24,541.02 L462.70,541.09 L463.19,541.13 L463.68,541.14 L464.18,541.12 L464.67,541.07 L465.16,540.96 L465.63,540.81 L466.07,540.61 L466.50,540.36 L466.93,540.07 L467.33,539.75 L467.72,539.40 L468.07,539.01 L468.37,538.61 L468.62,538.20 L468.81,537.83 L468.97,537.48 L469.10,537.11 L469.19,536.70 L469.23,536.24 L469.23,535.70 L469.18,535.04 L469.10,534.22 L468.95,533.22 L468.74,532.06 L468.48,530.78 L468.19,529.41 L467.88,527.97 L467.56,526.50 L467.26,525.03 L466.99,523.59 L466.74,522.14 L466.50,520.63 L466.26,519.08 L466.02,517.51 L465.77,515.94 L465.52,514.40 L465.26,512.90 L464.99,511.48 L464.68,510.11 L464.34,508.77 L463.99,507.48 L463.63,506.22 L463.29,505.02 L462.98,503.86 L462.71,502.75 L462.49,501.69 L462.32,500.67 L462.17,499.70 L462.06,498.78 L461.97,497.90 L461.92,497.07 L461.91,496.27 L461.93,495.51 L461.99,494.78 L462.11,494.08 L462.28,493.40 L462.51,492.74 L462.76,492.10 L463.04,491.49 L463.32,490.92 L463.60,490.40 L463.84,489.94 L464.06,489.54 L464.26,489.20 L464.46,488.92 L464.65,488.69 L464.82,488.51 L464.98,488.41 L465.09,488.37 L465.13,488.38 L465.08,488.43 L464.97,488.46 L464.88,488.49 L464.83,488.56 L464.82,488.70 L464.83,488.91 L464.87,489.17 L464.92,489.49 L464.99,489.86 L465.08,490.30 L465.17,490.79 L465.26,491.30 L465.35,491.84 L465.42,492.39 L465.48,492.92 L465.51,493.45 L465.53,493.99 L465.54,494.55 L465.55,495.11 L465.54,495.66 L465.51,496.22 L465.46,496.78 L465.37,497.35 L465.24,497.93 L465.07,498.56 L464.86,499.23 L464.62,499.94 L464.34,500.66 L464.03,501.39 L463.70,502.13 L463.35,502.85 L462.99,503.55 L462.61,504.21 L462.20,504.86 L461.76,505.51 L461.29,506.18 L460.80,506.85 L460.30,507.54 L459.79,508.24 L459.29,508.94 L458.81,509.62 L458.29,510.30 L457.75,511.00 L457.19,511.73 L456.63,512.48 L456.10,513.28 L455.61,514.11 L455.20,514.98 L454.86,515.84 L454.55,516.70 L454.29,517.59 L454.08,518.50 L453.92,519.43 L453.84,520.36 L453.86,521.29 L453.98,522.22 L454.23,523.12 L454.59,523.96 L455.03,524.74 L455.53,525.46 L456.09,526.13 L456.67,526.73 L457.28,527.26 L457.90,527.74 L458.57,528.15 L459.28,528.49 L460.01,528.77 L460.76,528.98 L461.51,529.14 L462.26,529.24 L463.00,529.30 L463.73,529.30 L464.46,529.25 L465.22,529.14 L465.98,528.99 L466.74,528.78 L467.48,528.53 L468.20,528.22 L468.87,527.85 L469.50,527.41 L470.06,526.89 L470.55,526.31 L470.99,525.69 L471.36,525.03 L471.67,524.35 L471.93,523.66 L472.12,522.96 L472.24,522.26 L472.29,521.53 L472.27,520.79 L472.18,520.05 L472.03,519.32 L471.82,518.61 L471.56,517.93 L471.24,517.28 L470.86,516.67 L470.41,516.11 L469.90,515.62 L469.35,515.18 L468.77,514.80 L468.16,514.48 L467.54,514.21 L466.91,514.01 L466.27,513.87 L465.61,513.82 L464.96,513.85 L464.31,513.94 L463.69,514.09 L463.09,514.29 L462.51,514.54 L461.97,514.84 L461.47,515.19 L461.01,515.60 L460.59,516.06 L460.22,516.56 L459.90,517.09 L459.62,517.63 L459.39,518.18 L459.21,518.72 L459.08,519.26 L459.01,519.81 L458.99,520.37 L459.03,520.91 L459.11,521.45 L459.24,521.97 L459.41,522.46 L459.62,522.91 L459.88,523.35 L460.24,523.76 L460.67,524.08 L461.11,524.34 L461.56,524.54 L461.98,524.71 L462.35,524.84 L462.64,524.95 L462.85,525.03Z M457.80,536.10 a3.00,3.00 0 1,0 6.00,0 a3.00,3.00 0 1,0 -6.00,0Z" fill="#000"/>
<path d="M455.00,582.94 L454.98,582.73 L454.94,582.45 L454.90,582.14 L454.86,581.80 L454.84,581.47 L454.85,581.16 L454.89,580.90 L454.97,580.70 L455.08,580.48 L455.24,580.24 L455.43,579.99 L455.66,579.74 L455.90,579.50 L456.17,579.28 L456.45,579.08 L456.75,578.91 L457.07,578.75 L457.43,578.60 L457.82,578.46 L458.23,578.34 L458.65,578.25 L459.08,578.19 L459.49,578.17 L459.88,578.20 L460.29,578.27 L460.71,578.37 L461.13,578.51 L461.54,578.68 L461.93,578.88 L462.29,579.09 L462.59,579.33 L462.86,579.57 L463.10,579.84 L463.33,580.15 L463.56,580.49 L463.76,580.85 L463.93,581.22 L464.09,581.59 L464.21,581.95 L464.30,582.29 L464.38,582.64 L464.44,583.01 L464.49,583.41 L464.52,583.82 L464.53,584.26 L464.52,584.71 L464.49,585.18 L464.43,585.66 L464.35,586.17 L464.24,586.72 L464.10,587.30 L463.94,587.90 L463.75,588.51 L463.53,589.11 L463.28,589.70 L463.01,590.26 L462.71,590.80 L462.36,591.35 L461.97,591.91 L461.54,592.47 L461.09,593.02 L460.63,593.56 L460.17,594.07 L459.72,594.57 L459.28,595.03 L458.84,595.46 L458.39,595.88 L457.93,596.27 L457.46,596.66 L456.99,597.03 L456.52,597.40 L456.06,597.75 L455.57,598.10 L455.04,598.45 L454.49,598.80 L453.95,599.13 L453.43,599.44 L452.96,599.72 L452.56,599.95 L452.26,600.13 L452.54,600.67 L452.85,600.54 L453.28,600.37 L453.79,600.17 L454.35,599.94 L454.96,599.69 L455.57,599.42 L456.18,599.14 L456.74,598.85 L457.28,598.56 L457.82,598.25 L458.36,597.94 L458.90,597.60 L459.44,597.24 L459.99,596.87 L460.54,596.46 L461.08,596.03 L461.62,595.58 L462.18,595.11 L462.74,594.61 L463.31,594.08 L463.86,593.53 L464.40,592.96 L464.91,592.36 L465.39,591.74 L465.82,591.11 L466.23,590.46 L466.61,589.78 L466.96,589.10 L467.28,588.41 L467.55,587.71 L467.78,587.02 L467.97,586.34 L468.10,585.67 L468.19,584.99 L468.23,584.32 L468.23,583.65 L468.18,582.99 L468.07,582.35 L467.91,581.72 L467.70,581.11 L467.42,580.51 L467.09,579.95 L466.70,579.43 L466.28,578.95 L465.83,578.50 L465.35,578.10 L464.86,577.75 L464.34,577.43 L463.80,577.17 L463.24,576.97 L462.67,576.81 L462.10,576.71 L461.53,576.64 L460.98,576.60 L460.44,576.59 L459.92,576.60 L459.40,576.64 L458.88,576.71 L458.36,576.82 L457.86,576.94 L457.37,577.10 L456.90,577.27 L456.46,577.47 L456.05,577.69 L455.67,577.94 L455.31,578.23 L454.98,578.53 L454.68,578.86 L454.41,579.20 L454.18,579.56 L453.99,579.92 L453.83,580.30 L453.75,580.73 L453.75,581.16 L453.80,581.58 L453.89,581.97 L453.99,582.33 L454.08,582.64 L454.16,582.88 L454.20,583.06Z M453.70,583.20 a3.10,3.10 0 1,0 6.20,0 a3.10,3.10 0 1,0 -6.20,0Z M470.00,580.70 a1.60,1.60 0 1,0 3.20,0 a1.60,1.60 0 1,0 -3.20,0Z M470.00,587.70 a1.60,1.60 0 1,0 3.20,0 a1.60,1.60 0 1,0 -3.20,0Z" fill="#000"/>
<text x="488.2" y="341.1" text-anchor="middle" style="font-family:'Liberation Serif',serif;font-size:21.5px;font-weight:bold" fill="#000" stroke="#000" stroke-width=".45">4</text>
<text x="488.2" y="357.1" text-anchor="middle" style="font-family:'Liberation Serif',serif;font-size:21.5px;font-weight:bold" fill="#000" stroke="#000" stroke-width=".45">4</text>
<text x="488.2" y="419.0" text-anchor="middle" style="font-family:'Liberation Serif',serif;font-size:21.5px;font-weight:bold" fill="#000" stroke="#000" stroke-width=".45">4</text>
<text x="488.2" y="435.0" text-anchor="middle" style="font-family:'Liberation Serif',serif;font-size:21.5px;font-weight:bold" fill="#000" stroke="#000" stroke-width=".45">4</text>
<text x="488.2" y="513.0" text-anchor="middle" style="font-family:'Liberation Serif',serif;font-size:21.5px;font-weight:bold" fill="#000" stroke="#000" stroke-width=".45">4</text>
<text x="488.2" y="529.0" text-anchor="middle" style="font-family:'Liberation Serif',serif;font-size:21.5px;font-weight:bold" fill="#000" stroke="#000" stroke-width=".45">4</text>
<text x="488.2" y="591.2" text-anchor="middle" style="font-family:'Liberation Serif',serif;font-size:21.5px;font-weight:bold" fill="#000" stroke="#000" stroke-width=".45">4</text>
<text x="488.2" y="607.2" text-anchor="middle" style="font-family:'Liberation Serif',serif;font-size:21.5px;font-weight:bold" fill="#000" stroke="#000" stroke-width=".45">4</text>
<text x="453.0" y="309.4" style="font-family:'Liberation Serif',serif;font-size:10.4px" fill="#000" stroke="#000" stroke-width=".2">1</text>
<text x="387.8" y="385.3" style="font-family:'Liberation Serif',serif;font-size:14px" fill="#000">Piano</text>
<text x="392.2" y="557.3" style="font-family:'Liberation Serif',serif;font-size:14.2px" fill="#000">Piano</text>
<path d="M516.98,336.31 L517.17,337.16 L517.05,338.08 L516.61,339.02 L515.90,339.91 L514.96,340.70 L513.84,341.31 L512.64,341.73 L511.42,341.91 L510.28,341.84 L509.29,341.53 L508.52,341.01 L508.02,340.29 L507.83,339.44 L507.95,338.52 L508.39,337.58 L509.10,336.69 L510.04,335.90 L511.16,335.29 L512.36,334.87 L513.58,334.69 L514.72,334.76 L515.71,335.07 L516.48,335.59Z" fill="#000"/>
<rect x="507.93" y="339.40" width="1.15" height="24.30" fill="#000"/>
<path d="M550.10,331.00L554.90,336.30C553.30,337.80 552.50,339.20 552.70,340.60L555.10,346.30C552.60,344.60 550.70,345.30 550.50,347.20C550.40,348.80 551.10,350.40 552.00,351.80C549.10,350.00 548.10,348.40 548.30,346.60C548.60,344.30 550.60,343.40 552.50,344.00L548.70,339.80C549.70,338.80 551.50,336.60 551.70,334.60L549.60,331.40Z" fill="#000" stroke="#000" stroke-width="0.55" stroke-linejoin="round"/>
<path d="M596.48,328.31 L596.67,329.16 L596.55,330.08 L596.11,331.02 L595.40,331.91 L594.46,332.70 L593.34,333.31 L592.14,333.73 L590.92,333.91 L589.78,333.84 L588.79,333.53 L588.02,333.01 L587.52,332.29 L587.33,331.44 L587.45,330.52 L587.89,329.58 L588.60,328.69 L589.54,327.90 L590.66,327.29 L591.86,326.87 L593.08,326.69 L594.22,326.76 L595.21,327.07 L595.98,327.59Z M595.02,328.34 L595.09,328.68 L594.96,329.13 L594.62,329.65 L594.10,330.23 L593.44,330.81 L592.68,331.35 L591.88,331.82 L591.08,332.19 L590.35,332.43 L589.73,332.52 L589.26,332.47 L588.98,332.26 L588.91,331.92 L589.04,331.47 L589.38,330.95 L589.90,330.37 L590.56,329.79 L591.32,329.25 L592.12,328.78 L592.92,328.41 L593.65,328.17 L594.27,328.08 L594.74,328.13Z" fill="#000" fill-rule="evenodd"/>
<rect x="587.22" y="331.40" width="1.15" height="24.60" fill="#000"/>
<path d="M645.98,336.01 L646.17,336.86 L646.05,337.78 L645.61,338.72 L644.90,339.61 L643.96,340.40 L642.84,341.01 L641.64,341.43 L640.42,341.61 L639.28,341.54 L638.29,341.23 L637.52,340.71 L637.02,339.99 L636.83,339.14 L636.95,338.22 L637.39,337.28 L638.10,336.39 L639.04,335.60 L640.16,334.99 L641.36,334.57 L642.58,334.39 L643.72,334.46 L644.71,334.77 L645.48,335.29Z M644.52,336.04 L644.59,336.38 L644.46,336.83 L644.12,337.35 L643.60,337.93 L642.94,338.51 L642.18,339.05 L641.38,339.52 L640.58,339.89 L639.85,340.13 L639.23,340.22 L638.76,340.17 L638.48,339.96 L638.41,339.62 L638.54,339.17 L638.88,338.65 L639.40,338.07 L640.06,337.49 L640.82,336.95 L641.62,336.48 L642.42,336.11 L643.15,335.87 L643.77,335.78 L644.24,335.83Z" fill="#ee1c1c" fill-rule="evenodd"/>
<rect x="636.82" y="339.20" width="1.15" height="24.60" fill="#ee1c1c"/>
<path d="M694.68,352.01 L694.87,352.86 L694.75,353.78 L694.31,354.72 L693.60,355.61 L692.66,356.40 L691.54,357.01 L690.34,357.43 L689.12,357.61 L687.98,357.54 L686.99,357.23 L686.22,356.71 L685.72,355.99 L685.53,355.14 L685.65,354.22 L686.09,353.28 L686.80,352.39 L687.74,351.60 L688.86,350.99 L690.06,350.57 L691.28,350.39 L692.42,350.46 L693.41,350.77 L694.18,351.29Z" fill="#000"/>
<rect x="693.90" y="327.20" width="1.00" height="25.70" fill="#4a4a4a"/>
<path d="M744.60,331.00L749.40,336.30C747.80,337.80 747.00,339.20 747.20,340.60L749.60,346.30C747.10,344.60 745.20,345.30 745.00,347.20C744.90,348.80 745.60,350.40 746.50,351.80C743.60,350.00 742.60,348.40 742.80,346.60C743.10,344.30 745.10,343.40 747.00,344.00L743.20,339.80C744.20,338.80 746.00,336.60 746.20,334.60L744.10,331.40Z" fill="#000" stroke="#000" stroke-width="0.55" stroke-linejoin="round"/>
<path d="M790.48,344.01 L790.67,344.86 L790.55,345.78 L790.11,346.72 L789.40,347.61 L788.46,348.40 L787.34,349.01 L786.14,349.43 L784.92,349.61 L783.78,349.54 L782.79,349.23 L782.02,348.71 L781.52,347.99 L781.33,347.14 L781.45,346.22 L781.89,345.28 L782.60,344.39 L783.54,343.60 L784.66,342.99 L785.86,342.57 L787.08,342.39 L788.22,342.46 L789.21,342.77 L789.98,343.29Z M789.02,344.04 L789.09,344.38 L788.96,344.83 L788.62,345.35 L788.10,345.93 L787.44,346.51 L786.68,347.05 L785.88,347.52 L785.08,347.89 L784.35,348.13 L783.73,348.22 L783.26,348.17 L782.98,347.96 L782.91,347.62 L783.04,347.17 L783.38,346.65 L783.90,346.07 L784.56,345.49 L785.32,344.95 L786.12,344.48 L786.92,344.11 L787.65,343.87 L788.27,343.78 L788.74,343.83Z" fill="#000" fill-rule="evenodd"/>
<rect x="789.70" y="319.40" width="1.00" height="25.50" fill="#333"/>
<path d="M835.30,331.00L840.10,336.30C838.50,337.80 837.70,339.20 837.90,340.60L840.30,346.30C837.80,344.60 835.90,345.30 835.70,347.20C835.60,348.80 836.30,350.40 837.20,351.80C834.30,350.00 833.30,348.40 833.50,346.60C833.80,344.30 835.80,343.40 837.70,344.00L833.90,339.80C834.90,338.80 836.70,336.60 836.90,334.60L834.80,331.40Z" fill="#000" stroke="#000" stroke-width="0.55" stroke-linejoin="round"/>
<path d="M881.30,331.00L886.10,336.30C884.50,337.80 883.70,339.20 883.90,340.60L886.30,346.30C883.80,344.60 881.90,345.30 881.70,347.20C881.60,348.80 882.30,350.40 883.20,351.80C880.30,350.00 879.30,348.40 879.50,346.60C879.80,344.30 881.80,343.40 883.70,344.00L879.90,339.80C880.90,338.80 882.70,336.60 882.90,334.60L880.80,331.40Z" fill="#000" stroke="#000" stroke-width="0.55" stroke-linejoin="round"/>
<path d="M928.28,340.31 L928.47,341.16 L928.35,342.08 L927.91,343.02 L927.20,343.91 L926.26,344.70 L925.14,345.31 L923.94,345.73 L922.72,345.91 L921.58,345.84 L920.59,345.53 L919.82,345.01 L919.32,344.29 L919.13,343.44 L919.25,342.52 L919.69,341.58 L920.40,340.69 L921.34,339.90 L922.46,339.29 L923.66,338.87 L924.88,338.69 L926.02,338.76 L927.01,339.07 L927.78,339.59Z M926.82,340.34 L926.89,340.68 L926.76,341.13 L926.42,341.65 L925.90,342.23 L925.24,342.81 L924.48,343.35 L923.68,343.82 L922.88,344.19 L922.15,344.43 L921.53,344.52 L921.06,344.47 L920.78,344.26 L920.71,343.92 L920.84,343.47 L921.18,342.95 L921.70,342.37 L922.36,341.79 L923.12,341.25 L923.92,340.78 L924.72,340.41 L925.45,340.17 L926.07,340.08 L926.54,340.13Z" fill="#000" fill-rule="evenodd"/>
<rect x="918.92" y="343.40" width="1.15" height="24.00" fill="#000"/>
<path d="M972.20,331.00L977.00,336.30C975.40,337.80 974.60,339.20 974.80,340.60L977.20,346.30C974.70,344.60 972.80,345.30 972.60,347.20C972.50,348.80 973.20,350.40 974.10,351.80C971.20,350.00 970.20,348.40 970.40,346.60C970.70,344.30 972.70,343.40 974.60,344.00L970.80,339.80C971.80,338.80 973.60,336.60 973.80,334.60L971.70,331.40Z" fill="#000" stroke="#000" stroke-width="0.55" stroke-linejoin="round"/>
<rect x="1086.0" y="334.10" width="8.4" height="3.8" fill="#000"/>
<rect x="612.0" y="412.00" width="8.4" height="3.8" fill="#000"/>
<rect x="612.0" y="506.00" width="8.4" height="3.8" fill="#000"/>
<rect x="612.0" y="584.20" width="8.4" height="3.8" fill="#000"/>
<rect x="796.4" y="412.00" width="8.4" height="3.8" fill="#000"/>
<rect x="796.4" y="506.00" width="8.4" height="3.8" fill="#000"/>
<rect x="796.4" y="584.20" width="8.4" height="3.8" fill="#000"/>
<rect x="933.5" y="412.00" width="8.4" height="3.8" fill="#000"/>
<rect x="933.5" y="506.00" width="8.4" height="3.8" fill="#000"/>
<rect x="933.5" y="584.20" width="8.4" height="3.8" fill="#000"/>
<rect x="1086.0" y="412.00" width="8.4" height="3.8" fill="#000"/>
<rect x="1086.0" y="506.00" width="8.4" height="3.8" fill="#000"/>
<rect x="1086.0" y="584.20" width="8.4" height="3.8" fill="#000"/>
<rect x="686.4" y="483" width="1.1" height="62.5" fill="#ea5f70"/>
<rect x="357.6" y="712.73" width="816.0" height="1.15" fill="#050505"/>
<rect x="357.6" y="720.73" width="816.0" height="1.15" fill="#050505"/>
<rect x="357.6" y="728.73" width="816.0" height="1.15" fill="#050505"/>
<rect x="357.6" y="736.73" width="816.0" height="1.15" fill="#050505"/>
<rect x="357.6" y="744.73" width="816.0" height="1.15" fill="#050505"/>
<rect x="357.6" y="790.73" width="816.0" height="1.15" fill="#050505"/>
<rect x="357.6" y="798.73" width="816.0" height="1.15" fill="#050505"/>
<rect x="357.6" y="806.73" width="816.0" height="1.15" fill="#050505"/>
<rect x="357.6" y="814.73" width="816.0" height="1.15" fill="#050505"/>
<rect x="357.6" y="822.73" width="816.0" height="1.15" fill="#050505"/>
<rect x="357.05" y="712.80" width="1.10" height="127.70" fill="#0a0a0a"/>
<rect x="586.65" y="712.80" width="1.10" height="127.70" fill="#0a0a0a"/>
<rect x="781.95" y="712.80" width="1.10" height="127.70" fill="#0a0a0a"/>
<rect x="977.25" y="712.80" width="1.10" height="127.70" fill="#0a0a0a"/>
<rect x="1173.05" y="712.80" width="1.10" height="127.70" fill="#0a0a0a"/>
<path d="M356.81,713.14 L356.48,713.45 L356.04,713.83 L355.50,714.29 L354.90,714.83 L354.26,715.46 L353.63,716.17 L353.01,716.98 L352.48,717.87 L351.99,718.82 L351.52,719.82 L351.05,720.91 L350.61,722.07 L350.20,723.30 L349.84,724.62 L349.54,726.00 L349.31,727.45 L349.15,728.99 L349.06,730.64 L349.02,732.35 L349.03,734.10 L349.09,735.87 L349.17,737.62 L349.28,739.32 L349.41,740.97 L349.58,742.61 L349.81,744.28 L350.09,745.92 L350.39,747.53 L350.69,749.07 L350.97,750.52 L351.21,751.85 L351.41,753.06 L351.56,754.14 L351.70,755.10 L351.81,755.96 L351.91,756.72 L351.98,757.41 L352.02,758.05 L352.03,758.68 L352.01,759.34 L351.96,760.01 L351.89,760.64 L351.80,761.24 L351.69,761.80 L351.54,762.35 L351.36,762.88 L351.14,763.40 L350.88,763.91 L350.53,764.45 L350.06,765.04 L349.49,765.66 L348.88,766.27 L348.27,766.84 L347.70,767.36 L347.22,767.81 L346.88,768.14 L347.12,768.46 L347.53,768.22 L348.09,767.90 L348.77,767.53 L349.51,767.10 L350.28,766.63 L351.04,766.12 L351.73,765.57 L352.32,764.99 L352.79,764.39 L353.19,763.78 L353.53,763.15 L353.81,762.49 L354.06,761.82 L354.26,761.12 L354.43,760.41 L354.59,759.66 L354.72,758.90 L354.81,758.14 L354.86,757.37 L354.88,756.58 L354.88,755.75 L354.86,754.85 L354.83,753.86 L354.79,752.74 L354.73,751.46 L354.65,750.05 L354.54,748.56 L354.43,747.00 L354.31,745.40 L354.19,743.79 L354.08,742.19 L353.99,740.63 L353.91,739.03 L353.82,737.36 L353.73,735.66 L353.64,733.95 L353.57,732.28 L353.52,730.67 L353.49,729.15 L353.49,727.75 L353.52,726.44 L353.56,725.16 L353.62,723.93 L353.70,722.75 L353.81,721.62 L353.95,720.55 L354.12,719.55 L354.32,718.63 L354.58,717.80 L354.92,717.01 L355.32,716.25 L355.75,715.55 L356.19,714.91 L356.59,714.34 L356.94,713.85 L357.19,713.46Z M357.19,823.14 L356.94,822.75 L356.59,822.26 L356.19,821.69 L355.75,821.05 L355.32,820.35 L354.92,819.59 L354.58,818.80 L354.32,817.97 L354.12,817.05 L353.95,816.05 L353.81,814.98 L353.70,813.85 L353.62,812.67 L353.56,811.44 L353.52,810.16 L353.49,808.85 L353.49,807.45 L353.52,805.93 L353.57,804.32 L353.64,802.65 L353.73,800.94 L353.82,799.24 L353.91,797.57 L353.99,795.97 L354.08,794.41 L354.19,792.81 L354.31,791.20 L354.43,789.60 L354.54,788.04 L354.65,786.55 L354.73,785.14 L354.79,783.86 L354.83,782.74 L354.86,781.75 L354.88,780.85 L354.88,780.02 L354.86,779.23 L354.81,778.46 L354.72,777.70 L354.59,776.94 L354.43,776.19 L354.26,775.48 L354.06,774.78 L353.81,774.11 L353.53,773.45 L353.19,772.82 L352.79,772.21 L352.32,771.61 L351.73,771.03 L351.04,770.48 L350.28,769.97 L349.51,769.50 L348.77,769.07 L348.09,768.70 L347.53,768.38 L347.12,768.14 L346.88,768.46 L347.22,768.79 L347.70,769.24 L348.27,769.76 L348.88,770.33 L349.49,770.94 L350.06,771.56 L350.53,772.15 L350.88,772.69 L351.14,773.20 L351.36,773.72 L351.54,774.25 L351.69,774.80 L351.80,775.36 L351.89,775.96 L351.96,776.59 L352.01,777.26 L352.03,777.92 L352.02,778.55 L351.98,779.19 L351.91,779.88 L351.81,780.64 L351.70,781.50 L351.56,782.46 L351.41,783.54 L351.21,784.75 L350.97,786.08 L350.69,787.53 L350.39,789.07 L350.09,790.68 L349.81,792.32 L349.58,793.99 L349.41,795.63 L349.28,797.28 L349.17,798.98 L349.09,800.73 L349.03,802.50 L349.02,804.25 L349.06,805.96 L349.15,807.61 L349.31,809.15 L349.54,810.60 L349.84,811.98 L350.20,813.30 L350.61,814.53 L351.05,815.69 L351.52,816.78 L351.99,817.78 L352.48,818.73 L353.01,819.62 L353.63,820.43 L354.26,821.14 L354.90,821.77 L355.50,822.31 L356.04,822.77 L356.48,823.15 L356.81,823.46Z" fill="#000"/>
<path d="M372.35,739.17 L372.14,739.01 L371.86,738.83 L371.54,738.62 L371.21,738.38 L370.89,738.14 L370.62,737.89 L370.43,737.65 L370.32,737.45 L370.23,737.20 L370.14,736.88 L370.06,736.52 L370.01,736.15 L369.99,735.77 L370.00,735.40 L370.04,735.05 L370.12,734.74 L370.24,734.41 L370.41,734.05 L370.62,733.67 L370.86,733.30 L371.12,732.95 L371.40,732.64 L371.67,732.40 L371.93,732.21 L372.22,732.06 L372.56,731.92 L372.94,731.80 L373.34,731.71 L373.73,731.66 L374.11,731.64 L374.45,731.67 L374.73,731.73 L375.03,731.83 L375.36,731.98 L375.72,732.19 L376.07,732.43 L376.40,732.69 L376.70,732.98 L376.95,733.26 L377.14,733.53 L377.31,733.84 L377.48,734.22 L377.63,734.66 L377.76,735.13 L377.86,735.61 L377.93,736.09 L377.96,736.53 L377.96,736.94 L377.92,737.37 L377.85,737.84 L377.74,738.32 L377.59,738.81 L377.41,739.27 L377.20,739.70 L376.96,740.07 L376.70,740.39 L376.38,740.69 L375.96,741.00 L375.47,741.29 L374.93,741.56 L374.35,741.78 L373.77,741.95 L373.20,742.06 L372.67,742.10 L372.15,742.07 L371.60,741.98 L371.05,741.83 L370.51,741.63 L369.99,741.38 L369.51,741.10 L369.08,740.79 L368.70,740.46 L368.33,740.08 L367.97,739.63 L367.63,739.13 L367.32,738.61 L367.05,738.08 L366.85,737.55 L366.70,737.04 L366.62,736.58 L366.59,736.10 L366.60,735.53 L366.66,734.91 L366.77,734.23 L366.93,733.53 L367.12,732.81 L367.36,732.10 L367.60,731.42 L367.88,730.80 L368.22,730.16 L368.63,729.49 L369.09,728.80 L369.58,728.09 L370.10,727.35 L370.61,726.60 L371.11,725.86 L371.57,725.15 L372.03,724.45 L372.50,723.76 L372.98,723.05 L373.46,722.33 L373.93,721.59 L374.39,720.83 L374.81,720.05 L375.21,719.27 L375.59,718.48 L375.95,717.68 L376.30,716.86 L376.62,716.05 L376.91,715.25 L377.16,714.45 L377.36,713.67 L377.51,712.89 L377.61,712.14 L377.67,711.42 L377.68,710.71 L377.67,710.04 L377.63,709.39 L377.57,708.77 L377.49,708.15 L377.39,707.51 L377.24,706.86 L377.07,706.23 L376.89,705.63 L376.68,705.07 L376.48,704.55 L376.28,704.10 L376.08,703.71 L375.89,703.38 L375.69,703.09 L375.48,702.82 L375.24,702.58 L374.96,702.36 L374.62,702.20 L374.22,702.14 L373.87,702.22 L373.58,702.36 L373.33,702.55 L373.10,702.77 L372.87,703.03 L372.65,703.32 L372.42,703.66 L372.19,704.04 L371.96,704.46 L371.71,704.92 L371.42,705.44 L371.10,706.02 L370.77,706.65 L370.46,707.33 L370.18,708.05 L369.96,708.82 L369.81,709.62 L369.73,710.43 L369.70,711.26 L369.71,712.11 L369.76,713.00 L369.86,713.92 L369.98,714.87 L370.13,715.86 L370.31,716.91 L370.53,718.01 L370.82,719.16 L371.13,720.34 L371.48,721.55 L371.83,722.80 L372.18,724.08 L372.51,725.39 L372.81,726.72 L373.08,728.12 L373.34,729.60 L373.59,731.13 L373.83,732.69 L374.07,734.26 L374.31,735.82 L374.56,737.34 L374.81,738.81 L375.09,740.26 L375.39,741.74 L375.70,743.22 L376.01,744.66 L376.30,746.03 L376.56,747.29 L376.76,748.42 L376.90,749.38 L376.99,750.15 L377.03,750.75 L377.04,751.20 L377.01,751.53 L376.95,751.79 L376.87,752.03 L376.74,752.29 L376.58,752.60 L376.38,752.92 L376.14,753.23 L375.86,753.52 L375.54,753.80 L375.20,754.05 L374.85,754.28 L374.50,754.46 L374.17,754.59 L373.85,754.68 L373.49,754.74 L373.10,754.76 L372.71,754.76 L372.31,754.72 L371.92,754.66 L371.55,754.58 L371.22,754.48 L370.93,754.36 L370.63,754.17 L370.31,753.94 L369.98,753.68 L369.68,753.42 L369.39,753.17 L369.14,752.94 L368.93,752.77 L367.87,754.23 L368.05,754.35 L368.30,754.53 L368.62,754.76 L368.99,755.02 L369.40,755.28 L369.84,755.54 L370.30,755.76 L370.78,755.92 L371.24,756.02 L371.70,756.09 L372.19,756.13 L372.68,756.14 L373.18,756.12 L373.67,756.07 L374.16,755.96 L374.63,755.81 L375.07,755.61 L375.50,755.36 L375.93,755.07 L376.33,754.75 L376.72,754.40 L377.07,754.01 L377.37,753.61 L377.62,753.20 L377.81,752.83 L377.97,752.48 L378.10,752.11 L378.19,751.70 L378.23,751.24 L378.23,750.70 L378.18,750.04 L378.10,749.22 L377.95,748.22 L377.74,747.06 L377.48,745.78 L377.19,744.41 L376.88,742.97 L376.56,741.50 L376.26,740.03 L375.99,738.59 L375.74,737.14 L375.50,735.63 L375.26,734.08 L375.02,732.51 L374.77,730.94 L374.52,729.40 L374.26,727.90 L373.99,726.48 L373.68,725.11 L373.34,723.77 L372.99,722.48 L372.63,721.22 L372.29,720.02 L371.98,718.86 L371.71,717.75 L371.49,716.69 L371.32,715.67 L371.17,714.70 L371.06,713.78 L370.97,712.90 L370.92,712.07 L370.91,711.27 L370.93,710.51 L370.99,709.78 L371.11,709.08 L371.28,708.40 L371.51,707.74 L371.76,707.10 L372.04,706.49 L372.32,705.92 L372.60,705.40 L372.84,704.94 L373.06,704.54 L373.26,704.20 L373.46,703.92 L373.65,703.69 L373.82,703.51 L373.98,703.41 L374.09,703.37 L374.13,703.38 L374.08,703.43 L373.97,703.46 L373.88,703.49 L373.83,703.56 L373.82,703.70 L373.83,703.91 L373.87,704.17 L373.92,704.49 L373.99,704.86 L374.08,705.30 L374.17,705.79 L374.26,706.30 L374.35,706.84 L374.42,707.39 L374.48,707.92 L374.51,708.45 L374.53,708.99 L374.54,709.55 L374.55,710.11 L374.54,710.66 L374.51,711.22 L374.46,711.78 L374.37,712.35 L374.24,712.93 L374.07,713.56 L373.86,714.23 L373.62,714.94 L373.34,715.66 L373.03,716.39 L372.70,717.13 L372.35,717.85 L371.99,718.55 L371.61,719.21 L371.20,719.86 L370.76,720.51 L370.29,721.18 L369.80,721.85 L369.30,722.54 L368.79,723.24 L368.29,723.94 L367.81,724.62 L367.29,725.30 L366.75,726.00 L366.19,726.73 L365.63,727.48 L365.10,728.28 L364.61,729.11 L364.20,729.98 L363.86,730.84 L363.55,731.70 L363.29,732.59 L363.08,733.50 L362.92,734.43 L362.84,735.36 L362.86,736.29 L362.98,737.22 L363.23,738.12 L363.59,738.96 L364.03,739.74 L364.53,740.46 L365.09,741.13 L365.67,741.73 L366.28,742.26 L366.90,742.74 L367.57,743.15 L368.28,743.49 L369.01,743.77 L369.76,743.98 L370.51,744.14 L371.26,744.24 L372.00,744.30 L372.73,744.30 L373.46,744.25 L374.22,744.14 L374.98,743.99 L375.74,743.78 L376.48,743.53 L377.20,743.22 L377.87,742.85 L378.50,742.41 L379.06,741.89 L379.55,741.31 L379.99,740.69 L380.36,740.03 L380.67,739.35 L380.93,738.66 L381.12,737.96 L381.24,737.26 L381.29,736.53 L381.27,735.79 L381.18,735.05 L381.03,734.32 L380.82,733.61 L380.56,732.93 L380.24,732.28 L379.86,731.67 L379.41,731.11 L378.90,730.62 L378.35,730.18 L377.77,729.80 L377.16,729.48 L376.54,729.21 L375.91,729.01 L375.27,728.87 L374.61,728.82 L373.96,728.85 L373.31,728.94 L372.69,729.09 L372.09,729.29 L371.51,729.54 L370.97,729.84 L370.47,730.19 L370.01,730.60 L369.59,731.06 L369.22,731.56 L368.90,732.09 L368.62,732.63 L368.39,733.18 L368.21,733.72 L368.08,734.26 L368.01,734.81 L367.99,735.37 L368.03,735.91 L368.11,736.45 L368.24,736.97 L368.41,737.46 L368.62,737.91 L368.88,738.35 L369.24,738.76 L369.67,739.08 L370.11,739.34 L370.56,739.54 L370.98,739.71 L371.35,739.84 L371.64,739.95 L371.85,740.03Z M366.80,751.10 a3.00,3.00 0 1,0 6.00,0 a3.00,3.00 0 1,0 -6.00,0Z" fill="#000"/>
<path d="M364.00,797.74 L363.98,797.53 L363.94,797.25 L363.90,796.94 L363.86,796.60 L363.84,796.27 L363.85,795.96 L363.89,795.70 L363.97,795.50 L364.08,795.28 L364.24,795.04 L364.43,794.79 L364.66,794.54 L364.90,794.30 L365.17,794.08 L365.45,793.88 L365.75,793.71 L366.07,793.55 L366.43,793.40 L366.82,793.26 L367.23,793.14 L367.65,793.05 L368.08,792.99 L368.49,792.97 L368.88,793.00 L369.29,793.07 L369.71,793.17 L370.13,793.31 L370.54,793.48 L370.93,793.68 L371.29,793.89 L371.59,794.13 L371.86,794.37 L372.10,794.64 L372.33,794.95 L372.56,795.29 L372.76,795.65 L372.93,796.02 L373.09,796.39 L373.21,796.75 L373.30,797.09 L373.38,797.44 L373.44,797.81 L373.49,798.21 L373.52,798.62 L373.53,799.06 L373.52,799.51 L373.49,799.98 L373.43,800.46 L373.35,800.97 L373.24,801.52 L373.10,802.10 L372.94,802.70 L372.75,803.31 L372.53,803.91 L372.28,804.50 L372.01,805.06 L371.71,805.60 L371.36,806.15 L370.97,806.71 L370.54,807.27 L370.09,807.82 L369.63,808.36 L369.17,808.87 L368.72,809.37 L368.28,809.83 L367.84,810.26 L367.39,810.68 L366.93,811.07 L366.46,811.46 L365.99,811.83 L365.52,812.20 L365.06,812.55 L364.57,812.90 L364.04,813.25 L363.49,813.60 L362.95,813.93 L362.43,814.24 L361.96,814.52 L361.56,814.75 L361.26,814.93 L361.54,815.47 L361.85,815.34 L362.28,815.17 L362.79,814.97 L363.35,814.74 L363.96,814.49 L364.57,814.22 L365.18,813.94 L365.74,813.65 L366.28,813.36 L366.82,813.05 L367.36,812.74 L367.90,812.40 L368.44,812.04 L368.99,811.67 L369.54,811.26 L370.08,810.83 L370.62,810.38 L371.18,809.91 L371.74,809.41 L372.31,808.88 L372.86,808.33 L373.40,807.76 L373.91,807.16 L374.39,806.54 L374.82,805.91 L375.23,805.26 L375.61,804.58 L375.96,803.90 L376.28,803.21 L376.55,802.51 L376.78,801.82 L376.97,801.14 L377.10,800.47 L377.19,799.79 L377.23,799.12 L377.23,798.45 L377.18,797.79 L377.07,797.15 L376.91,796.52 L376.70,795.91 L376.42,795.31 L376.09,794.75 L375.70,794.23 L375.28,793.75 L374.83,793.30 L374.35,792.90 L373.86,792.55 L373.34,792.23 L372.80,791.97 L372.24,791.77 L371.67,791.61 L371.10,791.51 L370.53,791.44 L369.98,791.40 L369.44,791.39 L368.92,791.40 L368.40,791.44 L367.88,791.51 L367.36,791.62 L366.86,791.74 L366.37,791.90 L365.90,792.07 L365.46,792.27 L365.05,792.49 L364.67,792.74 L364.31,793.03 L363.98,793.33 L363.68,793.66 L363.41,794.00 L363.18,794.36 L362.99,794.72 L362.83,795.10 L362.75,795.53 L362.75,795.96 L362.80,796.38 L362.89,796.77 L362.99,797.13 L363.08,797.44 L363.16,797.68 L363.20,797.86Z M362.70,798.00 a3.10,3.10 0 1,0 6.20,0 a3.10,3.10 0 1,0 -6.20,0Z M379.00,795.50 a1.60,1.60 0 1,0 3.20,0 a1.60,1.60 0 1,0 -3.20,0Z M379.00,802.50 a1.60,1.60 0 1,0 3.20,0 a1.60,1.60 0 1,0 -3.20,0Z" fill="#000"/>
<text x="361.6" y="696.6" style="font-family:'Liberation Serif',serif;font-size:10.4px" fill="#000" stroke="#000" stroke-width=".2">5</text>
<rect x="486.0" y="721.00" width="8.4" height="3.8" fill="#000"/>
<rect x="486.0" y="799.00" width="8.4" height="3.8" fill="#000"/>
<rect x="680.8" y="721.00" width="8.4" height="3.8" fill="#000"/>
<rect x="680.8" y="799.00" width="8.4" height="3.8" fill="#000"/>
<rect x="875.8" y="721.00" width="8.4" height="3.8" fill="#000"/>
<rect x="875.8" y="799.00" width="8.4" height="3.8" fill="#000"/>
<rect x="1071.4" y="721.00" width="8.4" height="3.8" fill="#000"/>
<rect x="1071.4" y="799.00" width="8.4" height="3.8" fill="#000"/>
<text x="382" y="835" style="font-family:'Liberation Sans',sans-serif;font-size:10.5px" fill="#b2b2b2">Piano</text>
</svg>
<div class="a dd">
<div class="" style="top:2px">Insert Track...</div>
<div class="hl" style="top:22px">Delete Track</div>
<div class="" style="top:42px">Solo Track<em>Shift + Alt + S</em></div>
<div class="" style="top:62px">Mute Track<em>Shift + Alt + M</em></div>
<div class="" style="top:82px">Remap Playback...</div>
<div class="dis" style="top:102px">Explode Track...</div>
<div class="" style="top:122px">Track Set<svg class="a" style="left:224px;top:6px" width="6" height="9"><path d="M0,0.5L4.6,4.5L0,8.5Z" fill="#fff"/></svg></div>
</div>
</body></html>
